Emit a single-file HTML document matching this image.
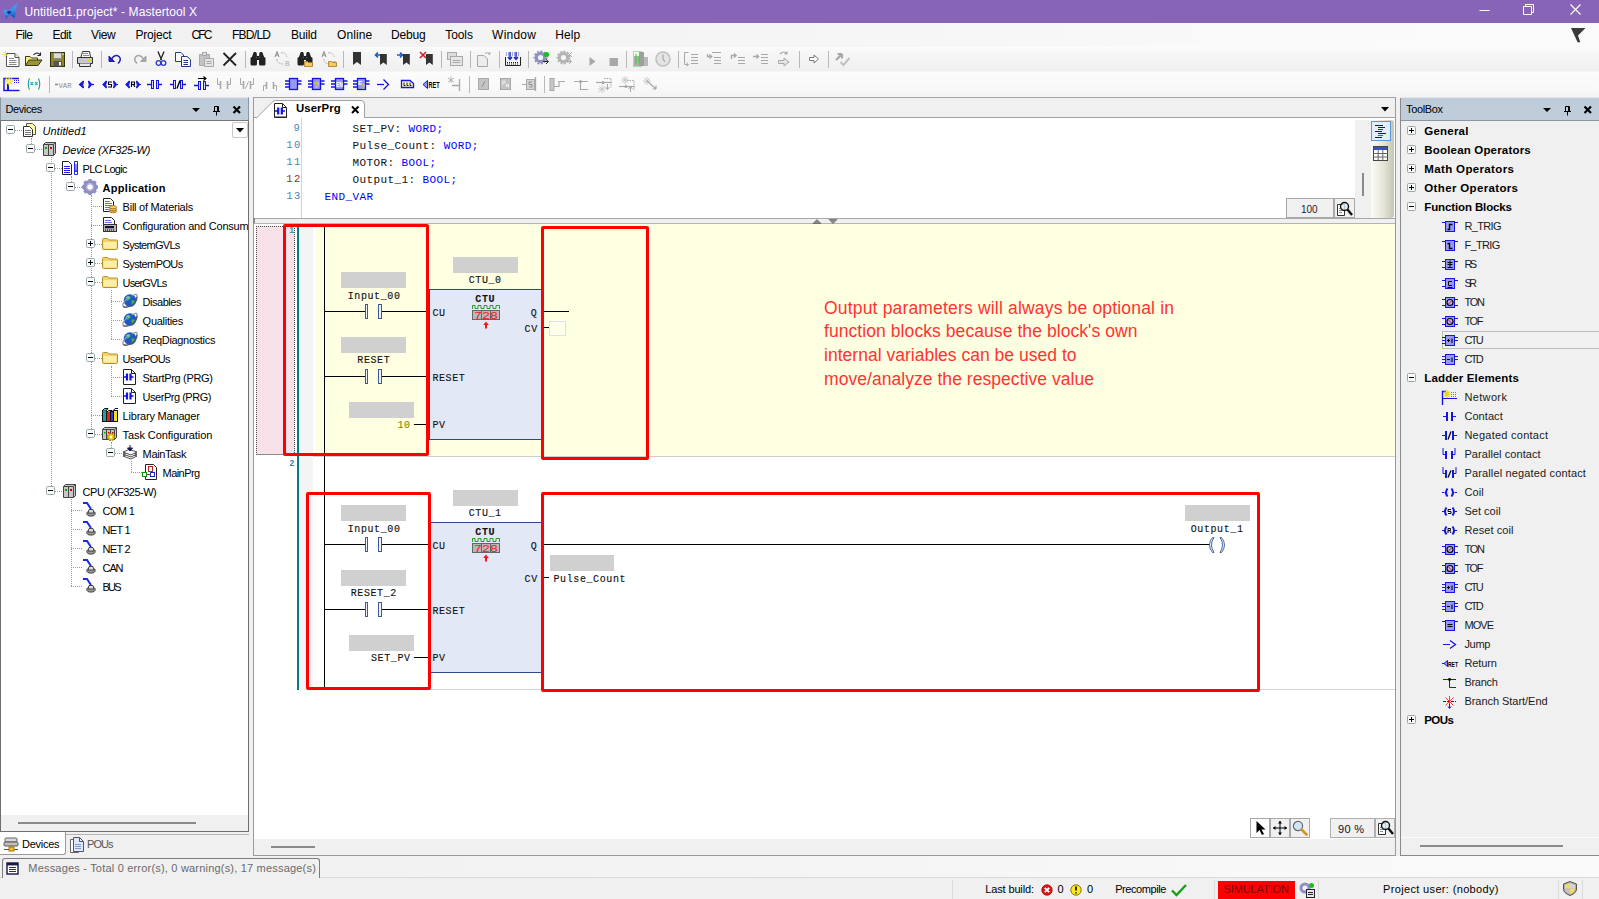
<!DOCTYPE html><html><head><meta charset="utf-8"><title>Untitled1.project* - Mastertool X</title><style>
*{box-sizing:border-box;margin:0;padding:0}
html,body{width:1599px;height:899px;overflow:hidden;background:#f0f0f0;font-family:"Liberation Sans",sans-serif;font-size:12px;color:#000}
.a{position:absolute}
.t{position:absolute;white-space:nowrap;line-height:1}
.m{font-family:"Liberation Mono",monospace}
svg{position:absolute;overflow:visible}
#title{left:0;top:0;width:1599px;height:23px;background:#8764b8}
#menu{left:0;top:23px;width:1599px;height:24px;background:linear-gradient(90deg,#f0f0f0,#f4f4f4 40%,#f9f9f9 75%,#fbfbfb)}
#tb{left:0;top:47px;width:1599px;height:51px;background:linear-gradient(#fcfcfc,#f6f6f6 6px,#f0f0f0 24px,#fcfcfc 25px,#f9f9f9 40px,#f3f3f3 50px)}
#tb2{left:0;top:72px;width:668px;height:24px;background:linear-gradient(#fcfcfc,#f7f7f7 8px,#eeeeee)}
.hdr{background:#bfcddb;height:22px}
.tree{font-size:11px}
.b{font-weight:bold}
.i{font-style:italic}
.gr{background:#d0d0d0}
.lt{font-family:"Liberation Mono",monospace;font-size:11px;color:#111}
.kw{color:#0000ff}
</style></head><body>
<div id="title" class="a">
<svg style="left:0px;top:0px" width="20" height="22" viewBox="0 0 20 22" ><defs><linearGradient id="lg" x1="0" y1="0" x2="0" y2="1"><stop offset="0" stop-color="#4a9ae8"/><stop offset=".5" stop-color="#3f8ee0"/><stop offset="1" stop-color="#0a4ec0"/></linearGradient></defs><path d="M17.2 2.8L14.8 18.2 6.3 12.4Z" fill="url(#lg)"/><path d="M2.6 9L11.6 11.4 6.2 19.2Z" fill="url(#lg)"/><path d="M6.6 12.2L8.8 10.7 11.6 11.4 9.2 14.5Z" fill="#0030b0"/></svg>
<div class="t" style="left:24.4px;top:5.84px;font-size:12px;letter-spacing:0.100px;color:#fff;">Untitled1.project* - Mastertool X</div>
<svg style="left:1479px;top:4px" width="12" height="12" viewBox="0 0 12 12" ><path d="M0.5 6.5H10.5" stroke="#fff" stroke-width="1" fill="none"/></svg><svg style="left:1523px;top:4px" width="12" height="12" viewBox="0 0 12 12" ><path d="M0.5 2.5H8.5V10.5H0.5Z M2.5 2.5V0.5H10.5V8.5H8.5" stroke="#fff" stroke-width="1" fill="none"/></svg><svg style="left:1570px;top:4px" width="12" height="12" viewBox="0 0 12 12" ><path d="M0.5 0.5L10.5 10.5M10.5 0.5L0.5 10.5" stroke="#fff" stroke-width="1.1" fill="none"/></svg>
</div>
<div id="menu" class="a">
<div class="t" style="left:15.4px;top:5.84px;font-size:12px;letter-spacing:-0.579px;">File</div>
<div class="t" style="left:52.4px;top:5.84px;font-size:12px;letter-spacing:-0.493px;">Edit</div>
<div class="t" style="left:91px;top:5.84px;font-size:12px;letter-spacing:-0.398px;">View</div>
<div class="t" style="left:135.4px;top:5.84px;font-size:12px;letter-spacing:-0.191px;">Project</div>
<div class="t" style="left:191.4px;top:5.84px;font-size:12px;letter-spacing:-1.831px;">CFC</div>
<div class="t" style="left:232px;top:5.84px;font-size:12px;letter-spacing:-0.735px;">FBD/LD</div>
<div class="t" style="left:291px;top:5.84px;font-size:12px;letter-spacing:-0.171px;">Build</div>
<div class="t" style="left:337.1px;top:5.84px;font-size:12px;letter-spacing:0.082px;">Online</div>
<div class="t" style="left:391px;top:5.84px;font-size:12px;letter-spacing:-0.190px;">Debug</div>
<div class="t" style="left:445.3px;top:5.84px;font-size:12px;letter-spacing:-0.103px;">Tools</div>
<div class="t" style="left:492.1px;top:5.84px;font-size:12px;letter-spacing:0.224px;">Window</div>
<div class="t" style="left:555.2px;top:5.84px;font-size:12px;letter-spacing:0.073px;">Help</div>
<svg style="left:1570px;top:5px" width="16" height="16" viewBox="0 0 16 16" ><path d="M1 0H15.5L8 7.5 10.3 14.2H7.6Z" fill="#3a3a3a"/></svg>
</div>
<div id="tb" class="a">
<svg style="left:2px;top:4px" width="16" height="16" viewBox="0 0 16 16" ><path d="M4.5 2.5H13L17 6.5V15.5H4.5Z" fill="#fff" stroke="#555"/><path d="M13 2.5V6.5H17" fill="#eee" stroke="#555"/><path d="M7 7.5H12M7 9.5H14.5M7 11.5H14.5M7 13.5H14.5" stroke="#8a8a8a"/><path d="M3.5 0V7M0 3.5H7M1 1L6 6M6 1L1 6" stroke="#f0e000" stroke-width=".9" stroke-dasharray="1.5 .8"/></svg>
<svg style="left:25px;top:4px" width="16" height="16" viewBox="0 0 16 16" ><path d="M0.5 14.5V5.5H5L6.5 7H12.5V9" fill="#f4f080" stroke="#3a3a10"/><path d="M0.5 14.5L4 9H17L13 14.5Z" fill="#9a9438" stroke="#3a3a10"/><path d="M8.5 4Q12 0 15.5 4M15.5 4.5V1.5M15.5 4.5H12.5" stroke="#222" fill="none" stroke-width="1.1"/></svg>
<svg style="left:49px;top:4px" width="16" height="16" viewBox="0 0 16 16" ><rect x="1.5" y="1.5" width="14" height="14" fill="#8c8630" stroke="#33300a"/><rect x="4.5" y="2" width="8" height="5.5" fill="#dcdcdc" stroke="#777" stroke-width=".6"/><rect x="4.5" y="10" width="8.5" height="5.5" fill="#555"/><rect x="10" y="11" width="2" height="3.5" fill="#f4f4f4"/><rect x="13.5" y="2.5" width="1.2" height="1.5" fill="#eee"/></svg>
<div class="a" style="left:72px;top:4px;width:1px;height:17px;background:#b8b8b8;"></div>
<svg style="left:77px;top:4px" width="16" height="16" viewBox="0 0 16 16" ><path d="M4 6L5.5 0.5H12.5L13.5 6" fill="#fff" stroke="#333"/><path d="M0.5 6.5H15.5V12.5H0.5Z" fill="#c8c8c8" stroke="#333"/><path d="M2.5 12.5V15.5H13.5V12.5" fill="#e8e8e8" stroke="#333"/><rect x="10" y="8" width="4" height="1.5" fill="#e8e000"/><path d="M6 2.5H11M6 4.5H12" stroke="#888"/></svg>
<div class="a" style="left:101px;top:4px;width:1px;height:17px;background:#b8b8b8;"></div>
<svg style="left:108px;top:4px" width="16" height="16" viewBox="0 0 16 16" ><path d="M3 8.5Q7 2.5 11 5.5Q14 8.5 10 12.5" stroke="#2222b4" stroke-width="1.5" fill="none"/><path d="M1 5V10.5H6.5Z" stroke="#2222b4" stroke-width="1" fill="#2222b4"/></svg>
<svg style="left:131px;top:4px" width="16" height="16" viewBox="0 0 16 16" ><path d="M13 8.5Q9 2.5 5 5.5Q2 8.5 6 12.5" stroke="#a8a8a8" stroke-width="1.6" fill="none"/><path d="M15 5V10.5H9.5Z" stroke="#a8a8a8" stroke-width="1" fill="#a8a8a8"/></svg>
<svg style="left:153px;top:4px" width="16" height="16" viewBox="0 0 16 16" ><path d="M5 0.5L8.5 9M11 0.5L7.5 9" stroke="#222" stroke-width="1.3"/><circle cx="5.5" cy="12" r="2.3" fill="none" stroke="#2a3ad0" stroke-width="1.3"/><circle cx="10.5" cy="12" r="2.3" fill="none" stroke="#2a3ad0" stroke-width="1.3"/></svg>
<svg style="left:175px;top:4px" width="16" height="16" viewBox="0 0 16 16" ><path d="M0.5 1.5H6L8.5 4V10.5H0.5Z" fill="#fff" stroke="#223a8a"/><path d="M6.5 5.5H12L15.5 8.5V15.5H6.5Z" fill="#fff" stroke="#223a8a"/><path d="M8.5 9.5H13M8.5 11.5H13M8.5 13.5H13" stroke="#223a8a"/></svg>
<svg style="left:198px;top:4px" width="16" height="16" viewBox="0 0 16 16" ><path d="M1.5 3.5H11.5V14.5H1.5Z" fill="#c4c4c4" stroke="#a8a8a8"/><rect x="4.5" y="1.5" width="4" height="3" fill="#ddd" stroke="#a8a8a8"/><path d="M6.5 7.5H15.5V15.5H6.5Z" fill="#e4e4e4" stroke="#a8a8a8"/><path d="M8.5 10.5H13.5M8.5 12.5H13.5" stroke="#a8a8a8"/></svg>
<svg style="left:222px;top:4px" width="16" height="16" viewBox="0 0 16 16" ><path d="M1.5 2L14 14.5M14 2L1.5 14.5" stroke="#222" stroke-width="1.8"/></svg>
<div class="a" style="left:245px;top:4px;width:1px;height:17px;background:#b8b8b8;"></div>
<svg style="left:250px;top:4px" width="16" height="16" viewBox="0 0 16 16" ><path d="M2.5 6L4 1.5H6L6.5 6M9.5 6L10 1.5H12L13.5 6" fill="#222" stroke="#222"/><rect x="0.5" y="6" width="6.5" height="8.5" rx="1.5" fill="#222"/><rect x="9" y="6" width="6.5" height="8.5" rx="1.5" fill="#222"/><rect x="6.5" y="5" width="3" height="4" fill="#222"/></svg>
<svg style="left:274px;top:4px" width="16" height="16" viewBox="0 0 16 16" ><path d="M1 6L3 0.5 5 6M1.8 4H4.2" stroke="#8a8a8a" fill="none"/><text x="11" y="15" font-family="Liberation Sans,sans-serif" font-size="7" fill="#a8a8a8">B</text><path d="M7 2Q12 1 13 6" stroke="#a8a8a8" fill="none" stroke-dasharray="1.5 1"/><path d="M3 8Q3 13 9 13" stroke="#a8a8a8" fill="none" stroke-dasharray="1.5 1"/></svg>
<svg style="left:297px;top:4px" width="16" height="16" viewBox="0 0 16 16" ><path d="M2.5 6L4 1.5H6L6.5 6M9.5 6L10 1.5H12L13.5 6" fill="#222" stroke="#222"/><rect x="0.5" y="6" width="6.5" height="8.5" rx="1.5" fill="#222"/><rect x="9" y="6" width="6.5" height="8.5" rx="1.5" fill="#222"/><rect x="6.5" y="5" width="3" height="4" fill="#222"/><path d="M7.5 10.5H10.5L11.5 11.5H15.5V15.5H7.5Z" fill="#f6c860" stroke="#a87818" stroke-width=".8"/></svg>
<svg style="left:321px;top:4px" width="16" height="16" viewBox="0 0 16 16" ><path d="M1 6L3 0.5 5 6M1.8 4H4.2" stroke="#8a8a8a" fill="none"/><text x="11" y="15" font-family="Liberation Sans,sans-serif" font-size="7" fill="#a8a8a8">B</text><path d="M7 2Q12 1 13 6" stroke="#a8a8a8" fill="none" stroke-dasharray="1.5 1"/><path d="M3 8Q3 13 9 13" stroke="#a8a8a8" fill="none" stroke-dasharray="1.5 1"/><path d="M7.5 10.5H10.5L11.5 11.5H15.5V15.5H7.5Z" fill="#f6c860" stroke="#a87818" stroke-width=".8"/></svg>
<div class="a" style="left:343px;top:4px;width:1px;height:17px;background:#b8b8b8;"></div>
<svg style="left:353px;top:4px" width="16" height="16" viewBox="0 0 16 16" ><g transform="translate(0,1)"><path d="M0 0H8V13L4 10 0 13Z" fill="#333"/></g></svg>
<svg style="left:374px;top:4px" width="16" height="16" viewBox="0 0 16 16" ><path d="M7 4H1.5M4 1.5L1.5 4 4 6.5" stroke="#1a5ac8" stroke-width="1.6" fill="none"/><g transform="translate(6,3) scale(.85)"><path d="M0 0H8V13L4 10 0 13Z" fill="#333"/></g></svg>
<svg style="left:396px;top:4px" width="16" height="16" viewBox="0 0 16 16" ><path d="M1 4H6.5M4 1.5L6.5 4 4 6.5" stroke="#1a5ac8" stroke-width="1.6" fill="none"/><g transform="translate(7,3) scale(.85)"><path d="M0 0H8V13L4 10 0 13Z" fill="#333"/></g></svg>
<svg style="left:419px;top:4px" width="16" height="16" viewBox="0 0 16 16" ><path d="M1 1L7 7M7 1L1 7" stroke="#d02020" stroke-width="1.6"/><g transform="translate(7,3) scale(.85)"><path d="M0 0H8V13L4 10 0 13Z" fill="#333"/></g></svg>
<div class="a" style="left:441px;top:4px;width:1px;height:17px;background:#b8b8b8;"></div>
<svg style="left:447px;top:4px" width="16" height="16" viewBox="0 0 16 16" ><rect x="0.5" y="1.5" width="9" height="7" fill="#ddd" stroke="#a8a8a8"/><rect x="3.5" y="5.5" width="12" height="9" fill="#e8e8e8" stroke="#a8a8a8"/><path d="M5.5 9.5H13.5M5.5 11.5H13.5" stroke="#a8a8a8"/></svg>
<div class="a" style="left:470px;top:4px;width:1px;height:17px;background:#b8b8b8;"></div>
<svg style="left:476px;top:4px" width="16" height="16" viewBox="0 0 16 16" ><path d="M1.5 4.5H8L11.5 8V15.5H1.5Z" fill="#ececec" stroke="#a8a8a8"/><path d="M9 2.5Q12 0.5 14 3M14 3V1M14 3H12" stroke="#a8a8a8" fill="none"/></svg>
<div class="a" style="left:499px;top:4px;width:1px;height:17px;background:#b8b8b8;"></div>
<svg style="left:505px;top:4px" width="16" height="16" viewBox="0 0 16 16" ><path d="M1 2H15M1 4H15" stroke="#4a5ac8" stroke-dasharray="1 1"/><path d="M5 1V8M11 1V8M3 6L5 8.5 7 6M9 6L11 8.5 13 6" stroke="#1a2ab8" stroke-width="1.3" fill="none"/><path d="M0.5 6V14.5H15.5V6" stroke="#222" fill="none"/><path d="M2 11.5H14M2 13H14" stroke="#222" stroke-dasharray="1 1"/></svg>
<div class="a" style="left:528px;top:4px;width:1px;height:17px;background:#b8b8b8;"></div>
<svg style="left:534px;top:4px" width="16" height="16" viewBox="0 0 16 16" ><circle cx="6.5" cy="6.5" r="4.2" fill="none" stroke="#8f8fc4" stroke-width="3.2"/><circle cx="6.5" cy="6.5" r="6.3" fill="none" stroke="#8f8fc4" stroke-width="1.4" stroke-dasharray="2 1.6"/><circle cx="12.5" cy="3.5" r="2.6" fill="#18c018"/><path d="M9 10.5H14M12 8.5L14.5 10.5 12 13" stroke="#222" fill="none"/></svg>
<svg style="left:557px;top:4px" width="16" height="16" viewBox="0 0 16 16" ><circle cx="6.5" cy="6.5" r="4.2" fill="none" stroke="#b4b4b4" stroke-width="3.2"/><circle cx="6.5" cy="6.5" r="6.3" fill="none" stroke="#b4b4b4" stroke-width="1.4" stroke-dasharray="2 1.6"/><path d="M10 1L15 6M15 1L10 6" stroke="#a8a8a8"/><path d="M9 10.5H14M12 8.5L14.5 10.5 12 13" stroke="#a8a8a8" fill="none"/></svg>
<svg style="left:586px;top:4px" width="16" height="16" viewBox="0 0 16 16" ><path d="M3.5 6V15L9.5 10.5Z" fill="#a8a8a8"/></svg>
<svg style="left:606px;top:4px" width="16" height="16" viewBox="0 0 16 16" ><rect x="3.5" y="7" width="8.5" height="8" fill="#a8a8a8"/></svg>
<div class="a" style="left:626px;top:4px;width:1px;height:17px;background:#b8b8b8;"></div>
<svg style="left:633px;top:4px" width="16" height="16" viewBox="0 0 16 16" ><rect x="1" y="5" width="5" height="10" fill="#b0b0b0"/><rect x="6" y="1" width="5" height="14" fill="#a0a0a0"/><rect x="11" y="6" width="4" height="9" fill="#b8b8b8"/><rect x="0.5" y="0.5" width="8" height="15" fill="none" stroke="#30e030" stroke-dasharray="1 1"/><path d="M3 3V13M6 5V12" stroke="#30d030"/></svg>
<svg style="left:655px;top:4px" width="16" height="16" viewBox="0 0 16 16" ><circle cx="8" cy="8" r="7" fill="#e4e4e4" stroke="#c0c0c0" stroke-width="1.6"/><path d="M8 3.5V8L10 11" stroke="#a8a8a8" fill="none" stroke-width="1.2"/></svg>
<div class="a" style="left:678px;top:4px;width:1px;height:17px;background:#b8b8b8;"></div>
<svg style="left:683px;top:4px" width="16" height="16" viewBox="0 0 16 16" ><path d="M5.5 1.5H1.5V13.5H5M3.5 11.5L5.5 13.5 3.5 15.5" stroke="#a8a8a8" fill="none"/><path d="M8 3.5H15M8 6.5H15M8 9.5H15M8 12.5H15" stroke="#a8a8a8"/></svg>
<svg style="left:706px;top:4px" width="16" height="16" viewBox="0 0 16 16" ><path d="M6 5.5H1.5V3M3.5 3.5L5.8 5.5 3.5 7.5" stroke="#a8a8a8" fill="none" stroke-width="1.3"/><path d="M6 1.5H15M8 6.5H15M8 9.5H15M8 12.5H15" stroke="#a8a8a8"/></svg>
<svg style="left:730px;top:4px" width="16" height="16" viewBox="0 0 16 16" ><path d="M1.5 8V4.5H6M4 2.5L6.2 4.5 4 6.5" stroke="#a8a8a8" fill="none" stroke-width="1.3"/><path d="M8 6.5H15M8 6.5H15M8 9.5H15M8 12.5H15" stroke="#a8a8a8"/></svg>
<svg style="left:753px;top:4px" width="16" height="16" viewBox="0 0 16 16" ><path d="M0 5.5H5.5M3.5 3.5L5.7 5.5 3.5 7.5" stroke="#a8a8a8" fill="none" stroke-width="1.3"/><path d="M8 3.5H15M8 6.5H15M8 9.5H15M8 12.5H15" stroke="#a8a8a8"/></svg>
<svg style="left:776px;top:4px" width="16" height="16" viewBox="0 0 16 16" ><path d="M4 3Q8 -1 11 3M11 3V.5M11 3H8.5" stroke="#a8a8a8" fill="none" stroke-width="1.2"/><path d="M2.5 9.5H8V7L13 11 8 15V12.5H2.5Z" fill="#e4e4e4" stroke="#a8a8a8"/></svg>
<div class="a" style="left:799px;top:4px;width:1px;height:17px;background:#b8b8b8;"></div>
<svg style="left:806px;top:4px" width="16" height="16" viewBox="0 0 16 16" ><path d="M3.5 6.5H8V4L12.5 8 8 12V9.5H3.5Z" fill="#fdfdfd" stroke="#7a7a7a" stroke-width="1"/></svg>
<div class="a" style="left:828px;top:4px;width:1px;height:17px;background:#b8b8b8;"></div>
<svg style="left:834px;top:4px" width="16" height="16" viewBox="0 0 16 16" ><path d="M2 9L8 3M8 3H3.5M8 3V7.5" stroke="#a8a8a8" stroke-width="2.2" fill="none"/><path d="M6.5 11L9.5 14 15.5 7" stroke="#c0c0c0" stroke-width="2" fill="none"/></svg>
<svg style="left:3px;top:29px" width="16" height="16" viewBox="0 0 16 16" ><path d="M1 14.5V2.5H16" stroke="#1414e6" fill="none" stroke-width="1.4"/><path d="M0.3 14.5H16.5" stroke="#1414e6" stroke-width="1.4"/><path d="M5 8V14" stroke="#1414e6" stroke-width="2"/><path d="M11 4.5H16M11 6.5H16" stroke="#22c" stroke-dasharray="1 1"/><path d="M6 1V9.5M2 5.2H10M3 2.2L9 8.2M9 2.2L3 8.2" stroke="#f0e000" stroke-width="1.3"/><circle cx="6" cy="5.2" r="1.6" fill="#ffff60"/></svg>
<svg style="left:27px;top:29px" width="16" height="16" viewBox="0 0 16 16" ><path d="M2.5 2.5Q0 8 2.5 13.5M11.5 2.5Q14 8 11.5 13.5" stroke="#18a0a0" fill="none" stroke-width="1.1"/><path d="M3.5 6L6 9M6 6L3.5 9M8 6L10.5 9M10.5 6L8 9" stroke="#18a0a0" stroke-width="1.1"/></svg>
<div class="a" style="left:49px;top:29px;width:1px;height:17px;background:#b8b8b8;"></div>
<svg style="left:55px;top:29px" width="16" height="16" viewBox="0 0 16 16" ><path d="M0 8.5H3" stroke="#8c8c8c" stroke-width="1.6"/><text x="3.5" y="11.5" font-family="Liberation Mono,monospace" font-size="7.5" fill="#8c8c8c" textLength="13" lengthAdjust="spacingAndGlyphs">VAR</text></svg>
<svg style="left:78px;top:29px" width="16" height="16" viewBox="0 0 16 16" ><path d="M5.5 5L1.5 8.5L5.5 12Q4 8.5 5.5 5ZM10.5 5L13.5 8.5L10.5 12Q12 8.5 10.5 5Z" fill="#1414e6" stroke="#1414e6" stroke-width="1.2"/><path d="M13.5 8.5H16" stroke="#1414e6" stroke-width="1.3"/></svg>
<svg style="left:102px;top:29px" width="16" height="16" viewBox="0 0 16 16" ><path d="M4.5 5L1 8.5L4.5 12Q3 8.5 4.5 5ZM11.5 5L14.5 8.5L11.5 12Q13 8.5 11.5 5Z" fill="#1414e6" stroke="#1414e6" stroke-width="1.2"/><path d="M14.5 8.5H16" stroke="#1414e6" stroke-width="1.2"/><path d="M10 6H6.5V8.5H9.5V11H6" stroke="#000" fill="none" stroke-width="1.1"/></svg>
<svg style="left:125px;top:29px" width="16" height="16" viewBox="0 0 16 16" ><path d="M4.5 5L1 8.5L4.5 12Q3 8.5 4.5 5ZM11.5 5L14.5 8.5L11.5 12Q13 8.5 11.5 5Z" fill="#1414e6" stroke="#1414e6" stroke-width="1.2"/><path d="M14.5 8.5H16" stroke="#1414e6" stroke-width="1.2"/><path d="M6.5 11V6H9.5V8.5H6.5M8.5 8.5L10 11" stroke="#000" fill="none" stroke-width="1.1"/></svg>
<svg style="left:147px;top:29px" width="16" height="16" viewBox="0 0 16 16" ><path d="M0 8.5H4M11 8.5H15" stroke="#1414e6" stroke-width="1.3"/><rect x="4.5" y="4.5" width="2" height="8" fill="#d4d4fc" stroke="#1414e6"/><rect x="9.5" y="4.5" width="2" height="8" fill="#d4d4fc" stroke="#1414e6"/></svg>
<svg style="left:170px;top:29px" width="16" height="16" viewBox="0 0 16 16" ><path d="M0 8.5H4M12 8.5H16" stroke="#1414e6" stroke-width="1.3"/><rect x="3.5" y="4.5" width="2" height="8" fill="#d4d4fc" stroke="#1414e6"/><rect x="10.5" y="4.5" width="2" height="8" fill="#d4d4fc" stroke="#1414e6"/><path d="M7 12.5L10 4.5" stroke="#000" stroke-width="1.4"/></svg>
<svg style="left:194px;top:29px" width="16" height="16" viewBox="0 0 16 16" ><path d="M0 9.5H4M11 9.5H15" stroke="#1414e6" stroke-width="1.3"/><rect x="4.5" y="5.5" width="2" height="8" fill="#d4d4fc" stroke="#1414e6"/><rect x="9.5" y="5.5" width="2" height="8" fill="#d4d4fc" stroke="#1414e6"/><path d="M4 2.5H12M9.5 0.5L12 2.5 9.5 4.5" stroke="#000" fill="none" stroke-width="1.1"/></svg>
<svg style="left:216px;top:29px" width="16" height="16" viewBox="0 0 16 16" ><path d="M1.5 2V8.5H4M14.5 2V8.5H12" stroke="#a8a8a8" fill="none"/><path d="M4.5 5V13M11.5 5V13" stroke="#a8a8a8" stroke-width="1.6"/></svg>
<svg style="left:239px;top:29px" width="16" height="16" viewBox="0 0 16 16" ><path d="M1.5 2V8.5H4M14.5 2V8.5H12" stroke="#a8a8a8" fill="none"/><path d="M4.5 5V13M11.5 5V13" stroke="#a8a8a8" stroke-width="1.6"/><path d="M6.5 12.5L9.5 5.5" stroke="#a8a8a8"/></svg>
<svg style="left:262px;top:29px" width="16" height="16" viewBox="0 0 16 16" ><path d="M1.5 15V9.5H4M14.5 15V9.5H12" stroke="#a8a8a8" fill="none"/><path d="M4.5 6V13M11.5 6V13" stroke="#a8a8a8" stroke-width="1.6"/></svg>
<svg style="left:285px;top:29px" width="16" height="16" viewBox="0 0 16 16" ><rect x="4.5" y="2.5" width="8" height="11" fill="#9898f6" stroke="#1414e6" stroke-width="1.3"/><path d="M0 5H4M0 8H4M0 11H4M13 5H16.5M13 8H16.5" stroke="#1414e6" stroke-width="1.3"/></svg>
<svg style="left:308px;top:29px" width="16" height="16" viewBox="0 0 16 16" ><rect x="4.5" y="2.5" width="8" height="11" fill="#9898f6" stroke="#1414e6" stroke-width="1.3"/><path d="M0 5H4M0 8H4M0 11H4M13 5H16.5M13 8H16.5" stroke="#1414e6" stroke-width="1.3"/><text x="5.6" y="11.5" font-family="Liberation Sans,sans-serif" font-size="9" font-weight="bold" fill="#e8d000">?</text></svg>
<svg style="left:331px;top:29px" width="16" height="16" viewBox="0 0 16 16" ><rect x="4.5" y="2.5" width="8" height="11" fill="#9898f6" stroke="#1414e6" stroke-width="1.3"/><path d="M0 5H4M0 8H4M0 11H4M13 5H16.5M13 8H16.5" stroke="#1414e6" stroke-width="1.3"/><text x="5" y="11" font-family="Liberation Sans,sans-serif" font-size="6.5" font-weight="bold" fill="#fff" textLength="7" lengthAdjust="spacingAndGlyphs">EN</text></svg>
<svg style="left:353px;top:29px" width="16" height="16" viewBox="0 0 16 16" ><rect x="4.5" y="2.5" width="8" height="11" fill="#9898f6" stroke="#1414e6" stroke-width="1.3"/><path d="M0 5H4M0 8H4M0 11H4M13 5H16.5M13 8H16.5" stroke="#1414e6" stroke-width="1.3"/><text x="5" y="9" font-family="Liberation Sans,sans-serif" font-size="6" font-weight="bold" fill="#fff">E</text><text x="8" y="12.5" font-family="Liberation Sans,sans-serif" font-size="7" font-weight="bold" fill="#e8d000">?</text></svg>
<svg style="left:376px;top:29px" width="16" height="16" viewBox="0 0 16 16" ><path d="M1 8.5H8" stroke="#1414e6" stroke-width="1.3"/><path d="M7.5 3.5L12.5 8.5 7.5 13.5" stroke="#1414e6" stroke-width="1.4" fill="none"/></svg>
<svg style="left:400px;top:29px" width="16" height="16" viewBox="0 0 16 16" ><path d="M1.5 4.5H10L13.5 7.5V11.5H1.5Z" fill="#fff8c0" stroke="#1414e6" stroke-width="1.3"/><path d="M4 6.5V9.5H5.5M7 6.5V9.5H8.5M10 6.5V9.5H11.5" stroke="#000" fill="none" stroke-width=".9"/></svg>
<svg style="left:422px;top:29px" width="16" height="16" viewBox="0 0 16 16" ><path d="M5.5 4.5L1 8.5 5.5 12.5Z" fill="#9898f6" stroke="#1414e6"/><text x="6.5" y="12" font-family="Liberation Sans,sans-serif" font-size="8.5" font-weight="bold" fill="#000" textLength="11" lengthAdjust="spacingAndGlyphs">RET</text></svg>
<svg style="left:447px;top:29px" width="16" height="16" viewBox="0 0 16 16" ><path d="M1 2L7 6M4 0.5V7M1 6L7 2" stroke="#a8a8a8" stroke-width=".9"/><path d="M5 9.5H12M12.5 3V15" stroke="#a8a8a8" stroke-width="1.3"/></svg>
<div class="a" style="left:469px;top:29px;width:1px;height:17px;background:#b8b8b8;"></div>
<svg style="left:477px;top:29px" width="16" height="16" viewBox="0 0 16 16" ><rect x="1.5" y="2.5" width="10" height="11" fill="#c4c4c4" stroke="#a8a8a8"/><path d="M5 11L8 5" stroke="#909090"/></svg>
<svg style="left:499px;top:29px" width="16" height="16" viewBox="0 0 16 16" ><rect x="1.5" y="2.5" width="10" height="11" fill="#c4c4c4" stroke="#a8a8a8"/><path d="M3.5 9V5H6V7H3.5M7.5 11V8L9.5 11V8" stroke="#eee" fill="none" stroke-width=".9"/></svg>
<svg style="left:521px;top:29px" width="16" height="16" viewBox="0 0 16 16" ><path d="M1 8.5H5" stroke="#a8a8a8"/><rect x="5.5" y="3.5" width="8" height="10" fill="#d4d4d4" stroke="#a8a8a8"/><path d="M14.5 1V15" stroke="#a8a8a8" stroke-width="1.3"/><path d="M11 6H8V8.5H11V11H8" stroke="#909090" fill="none"/></svg>
<div class="a" style="left:544px;top:29px;width:1px;height:17px;background:#b8b8b8;"></div>
<svg style="left:549px;top:29px" width="16" height="16" viewBox="0 0 16 16" ><rect x="1" y="2.5" width="4" height="12" fill="#c8c8c8" stroke="#a8a8a8"/><path d="M5 10.5H10V5.5H16" stroke="#a8a8a8" fill="none" stroke-width="1.2"/></svg>
<svg style="left:573px;top:29px" width="16" height="16" viewBox="0 0 16 16" ><path d="M1 5.5H15M7.5 5.5V13.5H15" stroke="#a8a8a8" fill="none" stroke-width="1.2"/><circle cx="7.5" cy="5.5" r="1.5" fill="#a8a8a8"/></svg>
<svg style="left:596px;top:29px" width="16" height="16" viewBox="0 0 16 16" ><path d="M0 6.5H16" stroke="#a8a8a8" stroke-width="1.2"/><path d="M8 2.5H15V11.5" stroke="#a8a8a8" fill="none" stroke-dasharray="1.5 1"/><path d="M11.5 8V13M9.5 11L11.5 13.5 13.5 11" stroke="#a8a8a8" fill="none"/><path d="M3 10L9 16M9 10L3 16M6 9V17M2 13H10" stroke="#c4c4c4" stroke-width=".9"/><circle cx="7" cy="6.5" r="1.5" fill="#a8a8a8"/></svg>
<svg style="left:619px;top:29px" width="16" height="16" viewBox="0 0 16 16" ><path d="M0 10.5H16" stroke="#a8a8a8" stroke-width="1.2"/><path d="M8 4.5H15V15" stroke="#a8a8a8" fill="none" stroke-dasharray="1.5 1"/><path d="M11.5 16V11M9.5 13L11.5 10.5 13.5 13" stroke="#a8a8a8" fill="none"/><path d="M3 1L9 7M9 1L3 7M6 0V8M2 4H10" stroke="#c4c4c4" stroke-width=".9"/><circle cx="7" cy="10.5" r="1.5" fill="#a8a8a8"/></svg>
<svg style="left:642px;top:29px" width="16" height="16" viewBox="0 0 16 16" ><path d="M2 2L8 8M8 2L2 8M5 1V9M1 5H9" stroke="#c4c4c4" stroke-width=".9"/><path d="M5 5L14 13M14 13V9.5M14 13H10.5" stroke="#a8a8a8" fill="none" stroke-width="1.2"/></svg>
</div>
<div class="a" style="left:0;top:98px;width:249px;height:734px;background:#fff;border:1px solid #6f6f6f;border-top:none"></div>
<div class="a hdr" style="left:0;top:97px;width:249px;height:24px;border-top:1px solid #dfe6ee;border-bottom:1px solid #787878;border-left:1px solid #8a96a3;border-right:1px solid #8a96a3"></div>
<div class="t" style="left:5.5px;top:103.69px;font-size:11px;letter-spacing:-0.404px;">Devices</div>
<svg style="left:192px;top:106px" width="50" height="10" viewBox="0 0 50 10" ><path d="M0 2H8L4 6Z" fill="#000"/><path d="M22.5 0.5H26.5V5.5H22.5Z M21 5.5H28 M24.5 6V9.5" stroke="#000" fill="none"/><path d="M25.5 1V5" stroke="#000"/><path d="M41.5 0.5L48 7 M48 0.5L41.5 7" stroke="#000" stroke-width="2.2" fill="none"/></svg>
<div class="a" style="left:232px;top:122px;width:16px;height:16px;background:#fff;border:1px solid #c8c8c8;border-radius:2px"></div>
<svg style="left:236px;top:128px" width="8" height="5" viewBox="0 0 8 5" ><path d="M0 0H8L4 4.5Z" fill="#000"/></svg>
<div class="a tree" style="left:1px;top:120px;width:247px;height:694px;overflow:hidden">
<div class="a" style="left:30px;top:18px;width:0;height:6px;border-left:1px dotted #9a9a9a"></div>
<div class="a" style="left:50px;top:37px;width:0;height:329px;border-left:1px dotted #9a9a9a"></div>
<div class="a" style="left:70px;top:56px;width:0;height:6px;border-left:1px dotted #9a9a9a"></div>
<div class="a" style="left:90px;top:75px;width:0;height:234px;border-left:1px dotted #9a9a9a"></div>
<div class="a" style="left:110px;top:170px;width:0;height:49px;border-left:1px dotted #9a9a9a"></div>
<div class="a" style="left:110px;top:246px;width:0;height:30px;border-left:1px dotted #9a9a9a"></div>
<div class="a" style="left:110px;top:322px;width:0;height:6px;border-left:1px dotted #9a9a9a"></div>
<div class="a" style="left:130px;top:341px;width:0;height:11px;border-left:1px dotted #9a9a9a"></div>
<div class="a" style="left:70px;top:379px;width:0;height:87px;border-left:1px dotted #9a9a9a"></div>
<div class="a" style="left:14px;top:10px;width:7px;height:0;border-top:1px dotted #9a9a9a"></div>
<svg style="left:5px;top:5px" width="9" height="9" viewBox="0 0 9 9" ><rect x="0.5" y="0.5" width="8" height="8" rx="1" fill="#fafcfc" stroke="#9aa6aa"/><path d="M2 4.5H7" stroke="#000"/></svg>
<svg style="left:21px;top:2px" width="16" height="16" viewBox="0 0 16 16" ><path d="M4.5 1.5H10.5L13.5 4.5V12.5H4.5Z" fill="#ffffa8" stroke="#555"/><path d="M1.5 4.5H7.5L10.5 7.5V14.5H1.5Z" fill="#fff" stroke="#333"/><path d="M3 8.5H9M3 10.5H9M3 12.5H9" stroke="#777"/></svg>
<div class="t i" style="left:41.6px;top:5.69px;font-size:11px;letter-spacing:0.061px;">Untitled1</div>
<div class="a" style="left:34px;top:29px;width:7px;height:0;border-top:1px dotted #9a9a9a"></div>
<svg style="left:25px;top:24px" width="9" height="9" viewBox="0 0 9 9" ><rect x="0.5" y="0.5" width="8" height="8" rx="1" fill="#fafcfc" stroke="#9aa6aa"/><path d="M2 4.5H7" stroke="#000"/></svg>
<svg style="left:41px;top:21px" width="16" height="16" viewBox="0 0 16 16" ><path d="M1.5 3.5L3.5 1.5H13.5V12.5L11.5 14.5H1.5Z" fill="#c8c8c8" stroke="#444"/><path d="M1.5 3.5H11.5V14.5M11.5 3.5L13.5 1.5M6.5 3.5V14.5" stroke="#444" fill="none"/><rect x="3" y="6" width="2" height="2" fill="#0a0"/><rect x="8" y="6" width="2" height="2" fill="#c00"/></svg>
<div class="t i" style="left:61.6px;top:24.69px;font-size:11px;letter-spacing:-0.177px;">Device (XF325-W)</div>
<div class="a" style="left:54px;top:48px;width:7px;height:0;border-top:1px dotted #9a9a9a"></div>
<svg style="left:45px;top:43px" width="9" height="9" viewBox="0 0 9 9" ><rect x="0.5" y="0.5" width="8" height="8" rx="1" fill="#fafcfc" stroke="#9aa6aa"/><path d="M2 4.5H7" stroke="#000"/></svg>
<svg style="left:61px;top:40px" width="16" height="16" viewBox="0 0 16 16" ><path d="M0.5 1.5H6.5L9.5 4.5V14.5H0.5Z" fill="#fff" stroke="#222"/><path d="M2 6.5H8M2 8.5H8M2 10.5H8M2 12.5H8" stroke="#22f"/><path d="M12.5 1.5H15.5V14.5H12.5Z" fill="none" stroke="#22f" rx="1"/><path d="M14 4V11M12.6 9.5L14 12 15.4 9.5" stroke="#22f" fill="none"/></svg>
<div class="t" style="left:81.6px;top:43.69px;font-size:11px;letter-spacing:-0.744px;">PLC Logic</div>
<div class="a" style="left:74px;top:67px;width:7px;height:0;border-top:1px dotted #9a9a9a"></div>
<svg style="left:65px;top:62px" width="9" height="9" viewBox="0 0 9 9" ><rect x="0.5" y="0.5" width="8" height="8" rx="1" fill="#fafcfc" stroke="#9aa6aa"/><path d="M2 4.5H7" stroke="#000"/></svg>
<svg style="left:81px;top:59px" width="16" height="16" viewBox="0 0 16 16" ><g transform="translate(8,8)"><rect x="-1.6" y="-8" width="3.2" height="4" fill="#8f8fc4" transform="rotate(0)"/><rect x="-1.6" y="-8" width="3.2" height="4" fill="#8f8fc4" transform="rotate(45)"/><rect x="-1.6" y="-8" width="3.2" height="4" fill="#8f8fc4" transform="rotate(90)"/><rect x="-1.6" y="-8" width="3.2" height="4" fill="#8f8fc4" transform="rotate(135)"/><rect x="-1.6" y="-8" width="3.2" height="4" fill="#8f8fc4" transform="rotate(180)"/><rect x="-1.6" y="-8" width="3.2" height="4" fill="#8f8fc4" transform="rotate(225)"/><rect x="-1.6" y="-8" width="3.2" height="4" fill="#8f8fc4" transform="rotate(270)"/><rect x="-1.6" y="-8" width="3.2" height="4" fill="#8f8fc4" transform="rotate(315)"/><circle r="5.4" fill="none" stroke="#8f8fc4" stroke-width="3.4"/><circle r="3.2" fill="#fff" stroke="#7676b0" stroke-width=".6"/></g></svg>
<div class="t b" style="left:101.6px;top:62.69px;font-size:11px;letter-spacing:0.291px;">Application</div>
<div class="a" style="left:90px;top:86px;width:11px;height:0;border-top:1px dotted #9a9a9a"></div>
<svg style="left:101px;top:78px" width="16" height="16" viewBox="0 0 16 16" ><path d="M1.5 0.5H8.5L11.5 3.5V13.5H1.5Z" fill="#fff" stroke="#222"/><path d="M3 3.5H8M3 5.5H10M3 7.5H10M3 9.5H8M3 11.5H7" stroke="#66f"/><ellipse cx="11" cy="13.2" rx="3.6" ry="1.6" fill="#e8b040" stroke="#8a6210" stroke-width=".7"/><ellipse cx="11" cy="11.2" rx="3.6" ry="1.6" fill="#f0c050" stroke="#8a6210" stroke-width=".7"/><ellipse cx="11" cy="9.2" rx="3.6" ry="1.6" fill="#f8d060" stroke="#8a6210" stroke-width=".7"/></svg>
<div class="t" style="left:121.6px;top:81.69px;font-size:11px;letter-spacing:-0.249px;">Bill of Materials</div>
<div class="a" style="left:90px;top:105px;width:11px;height:0;border-top:1px dotted #9a9a9a"></div>
<svg style="left:101px;top:97px" width="16" height="16" viewBox="0 0 16 16" ><path d="M1.5 0.5H9.5L12.5 3.5V8.5H1.5Z" fill="#fff" stroke="#222"/><path d="M3 3.5H9M3 5.5H10" stroke="#66f"/><rect x="1.5" y="7.5" width="13" height="7" fill="#b8b8b8" stroke="#333"/><rect x="3" y="9" width="9" height="2.2" fill="#113"/><path d="M3.5 12V14M5.5 12V14M7.5 12V14M9.5 12V14M11.5 12V14" stroke="#555"/></svg>
<div class="t" style="left:121.6px;top:100.69px;font-size:11px;letter-spacing:-0.207px;">Configuration and Consumption</div>
<div class="a" style="left:94px;top:124px;width:7px;height:0;border-top:1px dotted #9a9a9a"></div>
<svg style="left:85px;top:119px" width="9" height="9" viewBox="0 0 9 9" ><rect x="0.5" y="0.5" width="8" height="8" rx="1" fill="#fafcfc" stroke="#9aa6aa"/><path d="M2 4.5H7" stroke="#000"/><path d="M4.5 2V7" stroke="#000"/></svg>
<svg style="left:101px;top:116px" width="16" height="16" viewBox="0 0 16 16" ><path d="M0.5 3.5Q0.5 2.5 1.5 2.5H5.5L7 4H14.5Q15.5 4 15.5 5V12.5Q15.5 13.5 14.5 13.5H1.5Q0.5 13.5 0.5 12.5Z" fill="#f3d36a" stroke="#b8902a"/><path d="M1.5 6H14.5V12.5H1.5Z" fill="#fbeea8"/></svg>
<div class="t" style="left:121.6px;top:119.69px;font-size:11px;letter-spacing:-0.721px;">SystemGVLs</div>
<div class="a" style="left:94px;top:143px;width:7px;height:0;border-top:1px dotted #9a9a9a"></div>
<svg style="left:85px;top:138px" width="9" height="9" viewBox="0 0 9 9" ><rect x="0.5" y="0.5" width="8" height="8" rx="1" fill="#fafcfc" stroke="#9aa6aa"/><path d="M2 4.5H7" stroke="#000"/><path d="M4.5 2V7" stroke="#000"/></svg>
<svg style="left:101px;top:135px" width="16" height="16" viewBox="0 0 16 16" ><path d="M0.5 3.5Q0.5 2.5 1.5 2.5H5.5L7 4H14.5Q15.5 4 15.5 5V12.5Q15.5 13.5 14.5 13.5H1.5Q0.5 13.5 0.5 12.5Z" fill="#f3d36a" stroke="#b8902a"/><path d="M1.5 6H14.5V12.5H1.5Z" fill="#fbeea8"/></svg>
<div class="t" style="left:121.6px;top:138.69px;font-size:11px;letter-spacing:-0.602px;">SystemPOUs</div>
<div class="a" style="left:94px;top:162px;width:7px;height:0;border-top:1px dotted #9a9a9a"></div>
<svg style="left:85px;top:157px" width="9" height="9" viewBox="0 0 9 9" ><rect x="0.5" y="0.5" width="8" height="8" rx="1" fill="#fafcfc" stroke="#9aa6aa"/><path d="M2 4.5H7" stroke="#000"/></svg>
<svg style="left:101px;top:154px" width="16" height="16" viewBox="0 0 16 16" ><path d="M0.5 3.5Q0.5 2.5 1.5 2.5H5.5L7 4H14.5Q15.5 4 15.5 5V12.5Q15.5 13.5 14.5 13.5H1.5Q0.5 13.5 0.5 12.5Z" fill="#f3d36a" stroke="#b8902a"/><path d="M1.5 6H14.5V12.5H1.5Z" fill="#fbeea8"/></svg>
<div class="t" style="left:121.6px;top:157.69px;font-size:11px;letter-spacing:-0.862px;">UserGVLs</div>
<div class="a" style="left:110px;top:181px;width:11px;height:0;border-top:1px dotted #9a9a9a"></div>
<svg style="left:121px;top:173px" width="16" height="16" viewBox="0 0 16 16" ><circle cx="8" cy="7.5" r="6.3" fill="#1f56c8"/><path d="M3.5 4.5Q6 2.5 8.5 3.5Q9.5 5.5 7.5 6.5Q5.5 8.5 4.5 7.5Q3 6.5 3.5 4.5Z M9.5 7.5Q12 6.5 13 8.5Q12.5 11.5 10.5 12Q9 10 9.5 7.5Z" fill="#39b54a"/><circle cx="6" cy="4.5" r="1.6" fill="#9cc4ff" opacity=".7"/><path d="M1.2 13.5Q-0.5 10.5 6 5M10 3Q15.5 -0.5 15 3.5" stroke="#8a98a8" stroke-width="1.2" fill="none"/><path d="M1.2 13.5Q5 15.5 11 11.5Q15 8 15 3.5" stroke="#556" stroke-width="1.5" fill="none"/></svg>
<div class="t" style="left:141.6px;top:176.69px;font-size:11px;letter-spacing:-0.483px;">Disables</div>
<div class="a" style="left:110px;top:200px;width:11px;height:0;border-top:1px dotted #9a9a9a"></div>
<svg style="left:121px;top:192px" width="16" height="16" viewBox="0 0 16 16" ><circle cx="8" cy="7.5" r="6.3" fill="#1f56c8"/><path d="M3.5 4.5Q6 2.5 8.5 3.5Q9.5 5.5 7.5 6.5Q5.5 8.5 4.5 7.5Q3 6.5 3.5 4.5Z M9.5 7.5Q12 6.5 13 8.5Q12.5 11.5 10.5 12Q9 10 9.5 7.5Z" fill="#39b54a"/><circle cx="6" cy="4.5" r="1.6" fill="#9cc4ff" opacity=".7"/><path d="M1.2 13.5Q-0.5 10.5 6 5M10 3Q15.5 -0.5 15 3.5" stroke="#8a98a8" stroke-width="1.2" fill="none"/><path d="M1.2 13.5Q5 15.5 11 11.5Q15 8 15 3.5" stroke="#556" stroke-width="1.5" fill="none"/></svg>
<div class="t" style="left:141.6px;top:195.69px;font-size:11px;letter-spacing:-0.274px;">Qualities</div>
<div class="a" style="left:110px;top:219px;width:11px;height:0;border-top:1px dotted #9a9a9a"></div>
<svg style="left:121px;top:211px" width="16" height="16" viewBox="0 0 16 16" ><circle cx="8" cy="7.5" r="6.3" fill="#1f56c8"/><path d="M3.5 4.5Q6 2.5 8.5 3.5Q9.5 5.5 7.5 6.5Q5.5 8.5 4.5 7.5Q3 6.5 3.5 4.5Z M9.5 7.5Q12 6.5 13 8.5Q12.5 11.5 10.5 12Q9 10 9.5 7.5Z" fill="#39b54a"/><circle cx="6" cy="4.5" r="1.6" fill="#9cc4ff" opacity=".7"/><path d="M1.2 13.5Q-0.5 10.5 6 5M10 3Q15.5 -0.5 15 3.5" stroke="#8a98a8" stroke-width="1.2" fill="none"/><path d="M1.2 13.5Q5 15.5 11 11.5Q15 8 15 3.5" stroke="#556" stroke-width="1.5" fill="none"/></svg>
<div class="t" style="left:141.6px;top:214.69px;font-size:11px;letter-spacing:-0.326px;">ReqDiagnostics</div>
<div class="a" style="left:94px;top:238px;width:7px;height:0;border-top:1px dotted #9a9a9a"></div>
<svg style="left:85px;top:233px" width="9" height="9" viewBox="0 0 9 9" ><rect x="0.5" y="0.5" width="8" height="8" rx="1" fill="#fafcfc" stroke="#9aa6aa"/><path d="M2 4.5H7" stroke="#000"/></svg>
<svg style="left:101px;top:230px" width="16" height="16" viewBox="0 0 16 16" ><path d="M0.5 3.5Q0.5 2.5 1.5 2.5H5.5L7 4H14.5Q15.5 4 15.5 5V12.5Q15.5 13.5 14.5 13.5H1.5Q0.5 13.5 0.5 12.5Z" fill="#f3d36a" stroke="#b8902a"/><path d="M1.5 6H14.5V12.5H1.5Z" fill="#fbeea8"/></svg>
<div class="t" style="left:121.6px;top:233.69px;font-size:11px;letter-spacing:-0.680px;">UserPOUs</div>
<div class="a" style="left:110px;top:257px;width:11px;height:0;border-top:1px dotted #9a9a9a"></div>
<svg style="left:121px;top:249px" width="16" height="16" viewBox="0 0 16 16" ><path d="M1.5 0.5H9.5L13.5 4.5V15.5H1.5Z" fill="#fff" stroke="#222"/><path d="M9.5 0.5V4.5H13.5" fill="none" stroke="#222"/><path d="M1.5 8H5M8 8H11.5" stroke="#1212e8" stroke-width="1.6"/><path d="M5 4.5V11.5M8.5 4.5V11.5" stroke="#1212e8" stroke-width="2.2"/></svg>
<div class="t" style="left:141.6px;top:252.69px;font-size:11px;letter-spacing:-0.321px;">StartPrg (PRG)</div>
<div class="a" style="left:110px;top:276px;width:11px;height:0;border-top:1px dotted #9a9a9a"></div>
<svg style="left:121px;top:268px" width="16" height="16" viewBox="0 0 16 16" ><path d="M1.5 0.5H9.5L13.5 4.5V15.5H1.5Z" fill="#fff" stroke="#222"/><path d="M9.5 0.5V4.5H13.5" fill="none" stroke="#222"/><path d="M1.5 8H5M8 8H11.5" stroke="#1212e8" stroke-width="1.6"/><path d="M5 4.5V11.5M8.5 4.5V11.5" stroke="#1212e8" stroke-width="2.2"/></svg>
<div class="t" style="left:141.6px;top:271.69px;font-size:11px;letter-spacing:-0.481px;">UserPrg (PRG)</div>
<div class="a" style="left:90px;top:295px;width:11px;height:0;border-top:1px dotted #9a9a9a"></div>
<svg style="left:101px;top:287px" width="16" height="16" viewBox="0 0 16 16" ><rect x="0.5" y="3.5" width="4" height="11" fill="#21a0a0" stroke="#111"/><path d="M.5 3.5L2.5 1.5H6L4.5 3.5" fill="#5cc" stroke="#111"/><rect x="4.5" y="5.5" width="4" height="9" fill="#e02020" stroke="#111"/><path d="M4.5 5.5L6.5 3.5H10L8.5 5.5" fill="#f77" stroke="#111"/><rect x="8.5" y="4.5" width="3" height="10" fill="#3a3ad0" stroke="#111"/><rect x="11.5" y="3.5" width="4" height="11" fill="#f0e020" stroke="#111"/><path d="M11.5 3.5L13 1.5H16" fill="none" stroke="#111"/></svg>
<div class="t" style="left:121.6px;top:290.69px;font-size:11px;letter-spacing:-0.207px;">Library Manager</div>
<div class="a" style="left:94px;top:314px;width:7px;height:0;border-top:1px dotted #9a9a9a"></div>
<svg style="left:85px;top:309px" width="9" height="9" viewBox="0 0 9 9" ><rect x="0.5" y="0.5" width="8" height="8" rx="1" fill="#fafcfc" stroke="#9aa6aa"/><path d="M2 4.5H7" stroke="#000"/></svg>
<svg style="left:101px;top:306px" width="16" height="16" viewBox="0 0 16 16" ><path d="M0.5 3.5L2.5 1.5H14.5V11.5L12.5 13.5H0.5Z" fill="#c4c4c4" stroke="#444"/><path d="M.5 3.5H12.5V13.5M12.5 3.5L14.5 1.5M4.5 3.5V13.5M8.5 3.5V13.5" stroke="#444" fill="none"/><rect x="2" y="6" width="1.5" height="1.5" fill="#0a0"/><rect x="6" y="6" width="1.5" height="1.5" fill="#c00"/><rect x="10" y="6" width="1.5" height="1.5" fill="#c00"/><circle cx="9" cy="11" r="3.4" fill="#f5d000" stroke="#9a7b00" stroke-width="1.4" stroke-dasharray="1.6 1.1"/><circle cx="9" cy="11" r="1.2" fill="#fff"/></svg>
<div class="t" style="left:121.6px;top:309.69px;font-size:11px;letter-spacing:-0.082px;">Task Configuration</div>
<div class="a" style="left:114px;top:333px;width:7px;height:0;border-top:1px dotted #9a9a9a"></div>
<svg style="left:105px;top:328px" width="9" height="9" viewBox="0 0 9 9" ><rect x="0.5" y="0.5" width="8" height="8" rx="1" fill="#fafcfc" stroke="#9aa6aa"/><path d="M2 4.5H7" stroke="#000"/></svg>
<svg style="left:121px;top:325px" width="16" height="16" viewBox="0 0 16 16" ><path d="M1 11L7 8.5 15 11 9 14Z" fill="#fff" stroke="#222" stroke-width=".8"/><path d="M1 9L7 6.5 15 9 9 12Z" fill="#fff" stroke="#222" stroke-width=".8"/><path d="M1 7L7 4.5 15 7 9 10Z" fill="#fff" stroke="#222" stroke-width=".8"/><path d="M8 0V5M5.5 3L8 6 10.5 3Z" stroke="#114" fill="#22a"/></svg>
<div class="t" style="left:141.6px;top:328.69px;font-size:11px;letter-spacing:-0.366px;">MainTask</div>
<div class="a" style="left:130px;top:352px;width:11px;height:0;border-top:1px dotted #9a9a9a"></div>
<svg style="left:141px;top:344px" width="16" height="16" viewBox="0 0 16 16" ><path d="M3.5 0.5H11.5L14.5 3.5V15.5H3.5Z" fill="#fff" stroke="#222"/><rect x="6.5" y="2.5" width="4" height="5" fill="none" stroke="#c02020"/><rect x="8.5" y="8.5" width="4" height="4" fill="none" stroke="#2020c0"/><rect x="0.5" y="8.5" width="4" height="4" fill="#fff" stroke="#109010"/><path d="M4.5 10.5H8.5M8.5 7.5V8.5" stroke="#555"/></svg>
<div class="t" style="left:161.6px;top:347.69px;font-size:11px;letter-spacing:-0.577px;">MainPrg</div>
<div class="a" style="left:54px;top:371px;width:7px;height:0;border-top:1px dotted #9a9a9a"></div>
<svg style="left:45px;top:366px" width="9" height="9" viewBox="0 0 9 9" ><rect x="0.5" y="0.5" width="8" height="8" rx="1" fill="#fafcfc" stroke="#9aa6aa"/><path d="M2 4.5H7" stroke="#000"/></svg>
<svg style="left:61px;top:363px" width="16" height="16" viewBox="0 0 16 16" ><path d="M1.5 3.5L3.5 1.5H13.5V12.5L11.5 14.5H1.5Z" fill="#c8c8c8" stroke="#444"/><path d="M1.5 3.5H11.5V14.5M11.5 3.5L13.5 1.5M6.5 3.5V14.5" stroke="#444" fill="none"/><rect x="3" y="6" width="2" height="2" fill="#0a0"/><rect x="8" y="6" width="2" height="2" fill="#c00"/></svg>
<div class="t" style="left:81.6px;top:366.69px;font-size:11px;letter-spacing:-0.489px;">CPU (XF325-W)</div>
<div class="a" style="left:70px;top:390px;width:11px;height:0;border-top:1px dotted #9a9a9a"></div>
<svg style="left:81px;top:382px" width="16" height="16" viewBox="0 0 16 16" ><path d="M1 1H5L9 7" stroke="#1a2ae0" stroke-width="2" fill="none"/><ellipse cx="9" cy="11.5" rx="4.2" ry="2.6" fill="#9a9a9a" stroke="#222" stroke-width=".8"/><path d="M7 7.5H11L12 11H6Z" fill="#ddd" stroke="#222" stroke-width=".8"/></svg>
<div class="t" style="left:101.6px;top:385.69px;font-size:11px;letter-spacing:-0.659px;">COM 1</div>
<div class="a" style="left:70px;top:409px;width:11px;height:0;border-top:1px dotted #9a9a9a"></div>
<svg style="left:81px;top:401px" width="16" height="16" viewBox="0 0 16 16" ><path d="M1 1H5L9 7" stroke="#1a2ae0" stroke-width="2" fill="none"/><ellipse cx="9" cy="11.5" rx="4.2" ry="2.6" fill="#9a9a9a" stroke="#222" stroke-width=".8"/><path d="M7 7.5H11L12 11H6Z" fill="#ddd" stroke="#222" stroke-width=".8"/></svg>
<div class="t" style="left:101.6px;top:404.69px;font-size:11px;letter-spacing:-0.719px;">NET 1</div>
<div class="a" style="left:70px;top:428px;width:11px;height:0;border-top:1px dotted #9a9a9a"></div>
<svg style="left:81px;top:420px" width="16" height="16" viewBox="0 0 16 16" ><path d="M1 1H5L9 7" stroke="#1a2ae0" stroke-width="2" fill="none"/><ellipse cx="9" cy="11.5" rx="4.2" ry="2.6" fill="#9a9a9a" stroke="#222" stroke-width=".8"/><path d="M7 7.5H11L12 11H6Z" fill="#ddd" stroke="#222" stroke-width=".8"/></svg>
<div class="t" style="left:101.6px;top:423.69px;font-size:11px;letter-spacing:-0.719px;">NET 2</div>
<div class="a" style="left:70px;top:447px;width:11px;height:0;border-top:1px dotted #9a9a9a"></div>
<svg style="left:81px;top:439px" width="16" height="16" viewBox="0 0 16 16" ><path d="M1 1H5L9 7" stroke="#1a2ae0" stroke-width="2" fill="none"/><ellipse cx="9" cy="11.5" rx="4.2" ry="2.6" fill="#9a9a9a" stroke="#222" stroke-width=".8"/><path d="M7 7.5H11L12 11H6Z" fill="#ddd" stroke="#222" stroke-width=".8"/></svg>
<div class="t" style="left:101.6px;top:442.69px;font-size:11px;letter-spacing:-1.162px;">CAN</div>
<div class="a" style="left:70px;top:466px;width:11px;height:0;border-top:1px dotted #9a9a9a"></div>
<svg style="left:81px;top:458px" width="16" height="16" viewBox="0 0 16 16" ><path d="M1 1H5L9 7" stroke="#1a2ae0" stroke-width="2" fill="none"/><ellipse cx="9" cy="11.5" rx="4.2" ry="2.6" fill="#9a9a9a" stroke="#222" stroke-width=".8"/><path d="M7 7.5H11L12 11H6Z" fill="#ddd" stroke="#222" stroke-width=".8"/></svg>
<div class="t" style="left:101.6px;top:461.69px;font-size:11px;letter-spacing:-1.860px;">BUS</div>
</div>
<div class="a" style="left:1px;top:815px;width:247px;height:16px;background:#f0f0f0"></div>
<div class="a" style="left:18px;top:822px;width:178px;height:2px;background:#8a8a8a"></div>
<div class="a" style="left:0px;top:832px;width:66px;height:23px;background:#fff;border:1px solid #9a9a9a;border-top:none;border-left:none;border-radius:0 0 3px 0"></div>
<div class="a" style="left:66px;top:834px;width:183px;height:1px;background:#b4b4b4"></div>
<div class="t" style="left:22px;top:838.69px;font-size:11px;letter-spacing:-0.270px;">Devices</div>
<div class="t" style="left:87px;top:838.69px;font-size:11px;letter-spacing:-0.946px;color:#555;">POUs</div>
<svg style="left:3px;top:837px" width="17" height="15" viewBox="0 0 17 15" ><rect x="2" y="1" width="12" height="4" rx="1" fill="#d8d8d8" stroke="#666"/><rect x="1" y="5" width="14" height="4" rx="1" fill="#c0c0c0" stroke="#555"/><path d="M8 9V12M1 12.5H15" stroke="#555"/><rect x="6" y="10" width="5" height="4" fill="#f5c020" stroke="#a07800"/></svg>
<svg style="left:69px;top:836px" width="16" height="18" viewBox="0 0 16 18" ><path d="M1.5 3.5H9.5V16.5H1.5Z" fill="#fff" stroke="#666"/><path d="M4.5 1.5H10.5L14.5 5.5V15.5H4.5Z" fill="#dfe9fb" stroke="#556"/><path d="M10.5 1.5V5.5H14.5" fill="none" stroke="#556"/><path d="M6 8.5H12M6 10.5H12M6 12.5H12" stroke="#7a9ad8"/></svg>
<div class="a" style="left:253px;top:97px;width:1143px;height:1px;background:#a6a6a6;"></div>
<div class="a" style="left:253px;top:97px;width:1px;height:759px;background:#9a9a9a;"></div>
<div class="a" style="left:1395px;top:97px;width:1px;height:759px;background:#9a9a9a;"></div>
<div class="a" style="left:254px;top:117px;width:1141px;height:1px;background:#a0a0a0;"></div>
<svg style="left:256px;top:100px" width="110" height="18" viewBox="0 0 110 18" ><path d="M1 17.5L17 1.5Q18 0.5 19.5 0.5H105Q108.5 0.5 108.5 4V17.5" fill="#fff" stroke="#a0a0a0"/><path d="M1.5 17.5H108" stroke="#fff"/></svg>
<svg style="left:274px;top:102.6px" width="14" height="16" viewBox="0 0 14 16" ><path d="M0.5 0.5H8.5L12.5 4.5V14.5H0.5Z" fill="#fff" stroke="#222"/><path d="M8.5 0.5V4.5H12.5" fill="none" stroke="#222"/><path d="M1 8H4M7.5 8H11" stroke="#1212e8" stroke-width="1.6"/><path d="M4.2 4.5V11.5M7.8 4.5V11.5" stroke="#1212e8" stroke-width="2.2"/><path d="M1 13.5H12V14.5H1Z" fill="#222"/></svg>
<div class="t b" style="left:296px;top:103.35px;font-size:11.4px;letter-spacing:0.058px;">UserPrg</div>
<svg style="left:351px;top:106px" width="9" height="8" viewBox="0 0 9 8" ><path d="M1 0.5L7.5 7M7.5 0.5L1 7" stroke="#000" stroke-width="2" fill="none"/></svg>
<svg style="left:1381px;top:107px" width="8" height="5" viewBox="0 0 8 5" ><path d="M0 0H8L4 4.5Z" fill="#000"/></svg>
<div class="a" style="left:254px;top:118px;width:1141px;height:100px;background:#fff;"></div>
<div class="a" style="left:301px;top:118px;width:1px;height:100px;background:#d4d4d4;"></div>
<div class="t m" style="left:293.5px;top:122.95px;font-size:10.5px;color:#4a86b8;">9</div>
<div class="t m" style="left:324.6px;top:123.57px;font-size:11px;letter-spacing:0.4px;white-space:pre;color:#111;">    SET_PV: <span class="kw">WORD;</span></div>
<div class="t m" style="left:286.2px;top:139.95px;font-size:10.5px;letter-spacing:1.398px;color:#4a86b8;">10</div>
<div class="t m" style="left:324.6px;top:140.57px;font-size:11px;letter-spacing:0.4px;white-space:pre;color:#111;">    Pulse_Count: <span class="kw">WORD;</span></div>
<div class="t m" style="left:286.2px;top:156.95px;font-size:10.5px;letter-spacing:1.398px;color:#4a86b8;">11</div>
<div class="t m" style="left:324.6px;top:157.57px;font-size:11px;letter-spacing:0.4px;white-space:pre;color:#111;">    MOTOR: <span class="kw">BOOL;</span></div>
<div class="t m" style="left:286.2px;top:173.95px;font-size:10.5px;letter-spacing:1.398px;color:#a02828;">12</div>
<div class="t m" style="left:324.6px;top:174.57px;font-size:11px;letter-spacing:0.4px;white-space:pre;color:#111;">    Output_1: <span class="kw">BOOL;</span></div>
<div class="t m" style="left:286.2px;top:190.95px;font-size:10.5px;letter-spacing:1.398px;color:#4a86b8;">13</div>
<div class="t m" style="left:324.6px;top:191.57px;font-size:11px;letter-spacing:0.4px;white-space:pre;color:#111;"><span class="kw">END_VAR</span></div>
<div class="a" style="left:1355px;top:120px;width:16px;height:98px;background:#f0f0f0;"></div>
<div class="a" style="left:1362px;top:173px;width:2px;height:23px;background:#8a8a8a;"></div>
<div class="a" style="left:1371px;top:120px;width:23px;height:98px;background:linear-gradient(90deg,#fcfcf8,#e4e4d8 55%,#c6c6b2);border-radius:0 3px 3px 0"></div>
<div class="a" style="left:1371px;top:121px;width:20px;height:20px;background:#e3eefb;border:1px solid #5a96d8"></div>
<svg style="left:1374px;top:124px" width="14" height="14" viewBox="0 0 14 14" ><path d="M1 1.5H9M4 3.5H11M4 5.5H9M1 7.5H8M4 9.5H12M4 11.5H9M1 13.5H8" stroke="#222"/><path d="M4 5.5H9" stroke="#2a2ad8"/><path d="M4 11.5H9" stroke="#1a8a1a"/></svg>
<svg style="left:1373px;top:146px" width="16" height="16" viewBox="0 0 16 16" ><rect x="0.5" y="0.5" width="14" height="14" fill="#fff" stroke="#444"/><rect x="1" y="1" width="13" height="3" fill="#3a50c8"/><path d="M.5 7.5H14.5M.5 11H14.5M5.2 4V14.5M9.8 4V14.5" stroke="#666"/></svg>
<div class="a" style="left:1286px;top:198px;width:48px;height:20px;background:#f0f0f0;border:1px solid #a8a8a8"></div>
<div class="t" style="left:1301px;top:204.53px;font-size:10px;letter-spacing:-0.094px;color:#223;">100</div>
<div class="a" style="left:1334px;top:198px;width:21px;height:20px;background:#f0f0f0;border:1px solid #a8a8a8"></div>
<svg style="left:1336px;top:201px" width="17" height="16" viewBox="0 0 17 16" ><path d="M1.5 3.5H8.5V14.5H1.5Z" fill="#fff" stroke="#333"/><path d="M3 7.5H7M3 9.5H7M3 11.5H6" stroke="#888"/><circle cx="8.5" cy="5.5" r="4" fill="#d8eef8" fill-opacity=".8" stroke="#111" stroke-width="1.4"/><path d="M11.5 8.5L16 14" stroke="#111" stroke-width="2.4"/></svg>
<div class="a" style="left:254px;top:218px;width:1141px;height:1px;background:#a8a8a8;"></div>
<div class="a" style="left:254px;top:219px;width:1141px;height:4px;background:#f0f0f0;"></div>
<div class="a" style="left:253px;top:218px;width:2px;height:6px;background:#8a8a8a;"></div>
<div class="a" style="left:254px;top:223px;width:1141px;height:1px;background:#b4b4b4;"></div>
<svg style="left:812.5px;top:218.6px" width="26" height="5" viewBox="0 0 26 5" ><path d="M0 4.5L4 0.5 8 4.5Z" fill="#8a8a8a" stroke="#555" stroke-width=".6"/><path d="M16 0.5H24L20 4.5Z" fill="#8a8a8a" stroke="#555" stroke-width=".6"/></svg>
<div class="a" style="left:254px;top:224px;width:1141px;height:615px;background:#fff;"></div>
<div class="a" style="left:315px;top:224px;width:1080px;height:232px;background:#ffffe1;"></div>
<div class="a" style="left:299px;top:456px;width:1096px;height:1px;background:#cfcfcf;"></div>
<div class="a" style="left:297px;top:689px;width:1098px;height:1px;background:#d4d4d4;"></div>
<div class="a" style="left:256px;top:226px;width:39px;height:229px;background:#f8e1e8;border:1px dotted #4a4a4a;border-bottom:1px solid #8c8c8c"></div>
<div class="a" style="left:299px;top:227px;width:14px;height:463px;background:#f4f4f4;"></div>
<div class="a" style="left:297px;top:227px;width:2px;height:463px;background:#008080;"></div>
<div class="a" style="left:324px;top:227px;width:1px;height:463px;background:#000;"></div>
<div class="t b" style="left:289.3px;top:225.80px;font-size:8.5px;color:#1e9cc8;">1</div>
<div class="t b" style="left:289.4px;top:458.80px;font-size:8.5px;color:#1a8a9c;">2</div>
<div class="a" style="left:429px;top:289px;width:113px;height:151px;background:#e3e8f7;border:1px solid #2c4a86"></div>
<div class="a" style="left:453px;top:257px;width:65px;height:16px;background:#d0d0d0;"></div>
<div class="t m" style="left:468.7px;top:276.13px;font-size:10px;color:#111;letter-spacing:0.6px;-webkit-text-stroke:0.12px currentColor;">CTU_0</div>
<div class="t m b" style="left:475.3px;top:295.13px;font-size:10px;color:#111;letter-spacing:0.6px;-webkit-text-stroke:0.12px currentColor;">CTU</div>
<svg style="left:472px;top:304px" width="28" height="25" viewBox="0 0 28 25" ><path d="M0.5 5V1.5H3V4.5H6V1.5H9V4.5H12V1.5H15V4.5H18V1.5H21V4.5H24V1.5H27.5V5" stroke="#2a9a2a" fill="none"/><rect x="0.5" y="6.5" width="27" height="9" fill="#b8b8b8" stroke="#666"/><path d="M9.5 6.5V15.5M18.5 6.5V15.5" stroke="#666"/><text x="14" y="14.6" text-anchor="middle" font-family="Liberation Mono,monospace" font-size="10.5" fill="#f02020" textLength="24" lengthAdjust="spacingAndGlyphs">728</text><path d="M14 24.5V19.5" stroke="#f01818" stroke-width="2"/><path d="M11.2 21L14 17.5 16.8 21Z" fill="#f01818"/></svg>
<div class="t m" style="left:432.4px;top:309.13px;font-size:10px;color:#111;letter-spacing:0.6px;-webkit-text-stroke:0.12px currentColor;">CU</div>
<div class="t m" style="left:530.7px;top:309.13px;font-size:10px;color:#111;letter-spacing:0.6px;-webkit-text-stroke:0.12px currentColor;">Q</div>
<div class="t m" style="left:432.4px;top:374.13px;font-size:10px;color:#111;letter-spacing:0.6px;-webkit-text-stroke:0.12px currentColor;">RESET</div>
<div class="t m" style="left:432.4px;top:421.13px;font-size:10px;color:#111;letter-spacing:0.6px;-webkit-text-stroke:0.12px currentColor;">PV</div>
<div class="a" style="left:341px;top:272px;width:65px;height:16px;background:#d0d0d0;"></div>
<div class="t m" style="left:347.7px;top:292.13px;font-size:10px;color:#111;letter-spacing:0.6px;-webkit-text-stroke:0.12px currentColor;">Input_00</div>
<div class="a" style="left:325px;top:311px;width:40px;height:1px;background:#000;"></div>
<div class="a" style="left:382px;top:311px;width:47px;height:1px;background:#000;"></div>
<div class="a" style="left:365px;top:304px;width:3px;height:15px;background:#eef2fb;border:1px solid #3a5a9a"></div><div class="a" style="left:378px;top:304px;width:4px;height:15px;background:#eef2fb;border:1px solid #3a5a9a"></div>
<div class="a" style="left:341px;top:337px;width:65px;height:16px;background:#d0d0d0;"></div>
<div class="t m" style="left:357.3px;top:356.13px;font-size:10px;color:#111;letter-spacing:0.6px;-webkit-text-stroke:0.12px currentColor;">RESET</div>
<div class="a" style="left:325px;top:376px;width:40px;height:1px;background:#000;"></div>
<div class="a" style="left:382px;top:376px;width:47px;height:1px;background:#000;"></div>
<div class="a" style="left:365px;top:369px;width:3px;height:15px;background:#eef2fb;border:1px solid #3a5a9a"></div><div class="a" style="left:378px;top:369px;width:4px;height:15px;background:#eef2fb;border:1px solid #3a5a9a"></div>
<div class="a" style="left:349px;top:402px;width:65px;height:16px;background:#d0d0d0;"></div>
<div class="t m" style="left:397.40000000000003px;top:421.13px;font-size:10px;color:#8a8a00;letter-spacing:0.6px;-webkit-text-stroke:0.12px currentColor;">10</div>
<div class="a" style="left:414px;top:424px;width:15px;height:1px;background:#000;"></div>
<div class="a" style="left:429px;top:522px;width:113px;height:151px;background:#e3e8f7;border:1px solid #2c4a86"></div>
<div class="a" style="left:453px;top:490px;width:65px;height:16px;background:#d0d0d0;"></div>
<div class="t m" style="left:468.7px;top:509.13px;font-size:10px;color:#111;letter-spacing:0.6px;-webkit-text-stroke:0.12px currentColor;">CTU_1</div>
<div class="t m b" style="left:475.3px;top:528.13px;font-size:10px;color:#111;letter-spacing:0.6px;-webkit-text-stroke:0.12px currentColor;">CTU</div>
<svg style="left:472px;top:537px" width="28" height="25" viewBox="0 0 28 25" ><path d="M0.5 5V1.5H3V4.5H6V1.5H9V4.5H12V1.5H15V4.5H18V1.5H21V4.5H24V1.5H27.5V5" stroke="#2a9a2a" fill="none"/><rect x="0.5" y="6.5" width="27" height="9" fill="#b8b8b8" stroke="#666"/><path d="M9.5 6.5V15.5M18.5 6.5V15.5" stroke="#666"/><text x="14" y="14.6" text-anchor="middle" font-family="Liberation Mono,monospace" font-size="10.5" fill="#f02020" textLength="24" lengthAdjust="spacingAndGlyphs">728</text><path d="M14 24.5V19.5" stroke="#f01818" stroke-width="2"/><path d="M11.2 21L14 17.5 16.8 21Z" fill="#f01818"/></svg>
<div class="t m" style="left:432.4px;top:542.13px;font-size:10px;color:#111;letter-spacing:0.6px;-webkit-text-stroke:0.12px currentColor;">CU</div>
<div class="t m" style="left:530.7px;top:542.13px;font-size:10px;color:#111;letter-spacing:0.6px;-webkit-text-stroke:0.12px currentColor;">Q</div>
<div class="t m" style="left:432.4px;top:607.13px;font-size:10px;color:#111;letter-spacing:0.6px;-webkit-text-stroke:0.12px currentColor;">RESET</div>
<div class="t m" style="left:432.4px;top:654.13px;font-size:10px;color:#111;letter-spacing:0.6px;-webkit-text-stroke:0.12px currentColor;">PV</div>
<div class="a" style="left:341px;top:505px;width:65px;height:16px;background:#d0d0d0;"></div>
<div class="t m" style="left:347.7px;top:525.13px;font-size:10px;color:#111;letter-spacing:0.6px;-webkit-text-stroke:0.12px currentColor;">Input_00</div>
<div class="a" style="left:325px;top:544px;width:40px;height:1px;background:#000;"></div>
<div class="a" style="left:382px;top:544px;width:47px;height:1px;background:#000;"></div>
<div class="a" style="left:365px;top:537px;width:3px;height:15px;background:#eef2fb;border:1px solid #3a5a9a"></div><div class="a" style="left:378px;top:537px;width:4px;height:15px;background:#eef2fb;border:1px solid #3a5a9a"></div>
<div class="a" style="left:341px;top:570px;width:65px;height:16px;background:#d0d0d0;"></div>
<div class="t m" style="left:350.7px;top:589.13px;font-size:10px;color:#111;letter-spacing:0.6px;-webkit-text-stroke:0.12px currentColor;">RESET_2</div>
<div class="a" style="left:325px;top:609px;width:40px;height:1px;background:#000;"></div>
<div class="a" style="left:382px;top:609px;width:47px;height:1px;background:#000;"></div>
<div class="a" style="left:365px;top:602px;width:3px;height:15px;background:#eef2fb;border:1px solid #3a5a9a"></div><div class="a" style="left:378px;top:602px;width:4px;height:15px;background:#eef2fb;border:1px solid #3a5a9a"></div>
<div class="a" style="left:349px;top:635px;width:65px;height:16px;background:#d0d0d0;"></div>
<div class="t m" style="left:371.00000000000006px;top:654.13px;font-size:10px;color:#111;letter-spacing:0.6px;-webkit-text-stroke:0.12px currentColor;">SET_PV</div>
<div class="a" style="left:414px;top:657px;width:15px;height:1px;background:#000;"></div>
<div class="t m" style="left:524.6px;top:325.13px;font-size:10px;color:#111;letter-spacing:0.6px;-webkit-text-stroke:0.12px currentColor;">CV</div>
<div class="a" style="left:542px;top:311px;width:27px;height:1px;background:#000;"></div>
<div class="a" style="left:542px;top:327px;width:7px;height:1px;background:#000;"></div>
<div class="a" style="left:549px;top:321px;width:17px;height:15px;background:#ffffea;border:1px solid #dedef4"></div>
<div class="t m" style="left:524.6px;top:574.63px;font-size:10px;color:#111;letter-spacing:0.6px;-webkit-text-stroke:0.12px currentColor;">CV</div>
<div class="a" style="left:542px;top:544px;width:668px;height:1px;background:#000;"></div>
<div class="a" style="left:542px;top:577px;width:7px;height:1px;background:#000;"></div>
<div class="a" style="left:550px;top:555px;width:64px;height:16px;background:#d0d0d0;"></div>
<div class="t m" style="left:553.5px;top:574.63px;font-size:10px;color:#111;letter-spacing:0.6px;-webkit-text-stroke:0.12px currentColor;">Pulse_Count</div>
<div class="a" style="left:1185px;top:505px;width:65px;height:16px;background:#d0d0d0;"></div>
<div class="t m" style="left:1190.7px;top:525.13px;font-size:10px;color:#111;letter-spacing:0.6px;-webkit-text-stroke:0.12px currentColor;">Output_1</div>
<svg style="left:1208px;top:537px" width="20" height="16" viewBox="0 0 20 16" ><path d="M4.5 0.5Q1.5 4 1.5 8Q1.5 12 4.5 15.5H6Q3.5 12 3.5 8Q3.5 4 6 0.5Z M13.5 0.5Q16.5 4 16.5 8Q16.5 12 13.5 15.5H12Q14.5 12 14.5 8Q14.5 4 12 0.5Z" fill="#eef2fb" stroke="#3a5a9a" stroke-width=".9"/></svg>
<div class="a" style="left:283px;top:224px;width:146px;height:232px;border:3px solid #ff0000;border-radius:2px"></div>
<div class="a" style="left:541px;top:226px;width:108px;height:234px;border:3px solid #ff0000;border-radius:2px"></div>
<div class="a" style="left:306px;top:492px;width:125px;height:198px;border:3px solid #ff0000;border-radius:2px"></div>
<div class="a" style="left:541px;top:492px;width:719px;height:200px;border:3px solid #ff0000;border-radius:2px"></div>
<div class="t" style="left:824px;top:299.79px;font-size:17.5px;letter-spacing:0.177px;color:#ff3333;">Output parameters will always be optional in</div>
<div class="t" style="left:824px;top:323.39px;font-size:17.5px;letter-spacing:0.073px;color:#ff3333;">function blocks because the block's own</div>
<div class="t" style="left:824px;top:346.99px;font-size:17.5px;letter-spacing:0.017px;color:#ff3333;">internal variables can be used to</div>
<div class="t" style="left:824px;top:370.59px;font-size:17.5px;letter-spacing:0.048px;color:#ff3333;">move/analyze the respective value</div>
<div class="a" style="left:254px;top:839px;width:1141px;height:16px;background:#f0f0f0;"></div>
<div class="a" style="left:271px;top:846px;width:44px;height:2px;background:#8a8a8a;"></div>
<div class="a" style="left:253px;top:855px;width:1143px;height:1px;background:#9a9a9a;"></div>
<div class="a" style="left:1250px;top:818px;width:20px;height:20px;background:#fff;border:1px solid #a8a8a8"></div>
<div class="a" style="left:1270px;top:818px;width:20px;height:20px;background:#f0f0f0;border:1px solid #a8a8a8"></div>
<div class="a" style="left:1290px;top:818px;width:20px;height:20px;background:#f0f0f0;border:1px solid #a8a8a8"></div>
<svg style="left:1254px;top:820px" width="12" height="16" viewBox="0 0 12 16" ><path d="M2.5 1V13L5.5 10 8 15 10 14 7.5 9.5H11.5Z" fill="#000"/></svg>
<svg style="left:1273px;top:821px" width="14" height="14" viewBox="0 0 14 14" ><path d="M7 0V14M0 7H14" stroke="#000"/><path d="M5 2.5L7 0 9 2.5ZM5 11.5L7 14 9 11.5ZM2.5 5L0 7 2.5 9ZM11.5 5L14 7 11.5 9Z" fill="#000"/></svg>
<svg style="left:1292px;top:820px" width="16" height="16" viewBox="0 0 16 16" ><circle cx="6" cy="6" r="4.6" fill="#cfe6fa" stroke="#667" stroke-width="1.2"/><path d="M9.5 9.5L14.5 14.5" stroke="#c89a20" stroke-width="2.6" stroke-linecap="round"/></svg>
<div class="a" style="left:1330px;top:818px;width:45px;height:20px;background:#f0f0f0;border:1px solid #b0b0b0"></div>
<div class="t" style="left:1338px;top:823.99px;font-size:11px;letter-spacing:0.309px;color:#112;">90 %</div>
<div class="a" style="left:1375px;top:818px;width:20px;height:20px;background:#f0f0f0;border:1px solid #b0b0b0"></div>
<svg style="left:1377px;top:820px" width="17" height="16" viewBox="0 0 17 16" ><path d="M1.5 3.5H8.5V14.5H1.5Z" fill="#fff" stroke="#333"/><path d="M3 7.5H7M3 9.5H7M3 11.5H6" stroke="#888"/><circle cx="8.5" cy="5.5" r="4" fill="#d8eef8" fill-opacity=".8" stroke="#111" stroke-width="1.4"/><path d="M11.5 8.5L16 14" stroke="#111" stroke-width="2.4"/></svg>
<div class="a" style="left:1400px;top:98px;width:199px;height:758px;background:#f0f0f0;border-left:1px solid #8a8a8a;border-bottom:1px solid #8a8a8a"></div>
<div class="a" style="left:1401px;top:97px;width:198px;height:24px;background:#bfcddb;border-top:1px solid #dfe6ee;border-bottom:1px solid #8a96a3"></div>
<div class="t" style="left:1406px;top:103.69px;font-size:11px;letter-spacing:-0.355px;">ToolBox</div>
<svg style="left:1543px;top:106px" width="50" height="10" viewBox="0 0 50 10" ><path d="M0 2H8L4 6Z" fill="#000"/><path d="M22.5 0.5H26.5V5.5H22.5Z M21 5.5H28 M24.5 6V9.5" stroke="#000" fill="none"/><path d="M25.5 1V5" stroke="#000"/><path d="M41.5 0.5L48 7 M48 0.5L41.5 7" stroke="#000" stroke-width="2.2" fill="none"/></svg>
<svg style="left:1407px;top:126px" width="9" height="9" viewBox="0 0 9 9" ><rect x="0.5" y="0.5" width="8" height="8" rx="1" fill="#fafcfc" stroke="#9aa6aa"/><path d="M2 4.5H7" stroke="#000"/><path d="M4.5 2V7" stroke="#000"/></svg>
<div class="t b" style="left:1424.3px;top:125.97px;font-size:11.5px;letter-spacing:0.212px;">General</div>
<svg style="left:1407px;top:145px" width="9" height="9" viewBox="0 0 9 9" ><rect x="0.5" y="0.5" width="8" height="8" rx="1" fill="#fafcfc" stroke="#9aa6aa"/><path d="M2 4.5H7" stroke="#000"/><path d="M4.5 2V7" stroke="#000"/></svg>
<div class="t b" style="left:1424.3px;top:144.97px;font-size:11.5px;letter-spacing:0.179px;">Boolean Operators</div>
<svg style="left:1407px;top:164px" width="9" height="9" viewBox="0 0 9 9" ><rect x="0.5" y="0.5" width="8" height="8" rx="1" fill="#fafcfc" stroke="#9aa6aa"/><path d="M2 4.5H7" stroke="#000"/><path d="M4.5 2V7" stroke="#000"/></svg>
<div class="t b" style="left:1424.3px;top:163.97px;font-size:11.5px;letter-spacing:0.354px;">Math Operators</div>
<svg style="left:1407px;top:183px" width="9" height="9" viewBox="0 0 9 9" ><rect x="0.5" y="0.5" width="8" height="8" rx="1" fill="#fafcfc" stroke="#9aa6aa"/><path d="M2 4.5H7" stroke="#000"/><path d="M4.5 2V7" stroke="#000"/></svg>
<div class="t b" style="left:1424.3px;top:182.97px;font-size:11.5px;letter-spacing:0.348px;">Other Operators</div>
<svg style="left:1407px;top:202px" width="9" height="9" viewBox="0 0 9 9" ><rect x="0.5" y="0.5" width="8" height="8" rx="1" fill="#fafcfc" stroke="#9aa6aa"/><path d="M2 4.5H7" stroke="#000"/></svg>
<div class="t b" style="left:1424.3px;top:201.97px;font-size:11.5px;letter-spacing:-0.126px;">Function Blocks</div>
<svg style="left:1442px;top:219px" width="16" height="16" viewBox="0 0 16 16" ><rect x="3.5" y="2.5" width="9" height="10" fill="#9898f6" stroke="#1414e6"/><path d="M0 3.5H3.5M12.5 3.5H16" stroke="#1414e6"/><path d="M5.5 10.5H7.5V5.5H10.5" stroke="#000" stroke-width="1.4" fill="none"/></svg>
<div class="t" style="left:1464.4px;top:220.69px;font-size:11px;letter-spacing:-0.647px;color:#1a1a1a;">R_TRIG</div>
<svg style="left:1442px;top:238px" width="16" height="16" viewBox="0 0 16 16" ><rect x="3.5" y="2.5" width="9" height="10" fill="#9898f6" stroke="#1414e6"/><path d="M0 3.5H3.5M12.5 3.5H16" stroke="#1414e6"/><path d="M5.5 5.5H7.5V10.5H10.5" stroke="#000" stroke-width="1.4" fill="none"/></svg>
<div class="t" style="left:1464.4px;top:239.69px;font-size:11px;letter-spacing:-0.642px;color:#1a1a1a;">F_TRIG</div>
<svg style="left:1442px;top:257px" width="16" height="16" viewBox="0 0 16 16" ><rect x="3.5" y="2.5" width="9" height="10" fill="#9898f6" stroke="#1414e6"/><path d="M0 4.5H3.5M0 10.5H3.5M12.5 4.5H16" stroke="#1414e6"/><path d="M5.5 5.5H10.5M5.5 7.5H10.5M5.5 10.5H10.5M8 3.5V11" stroke="#000"/></svg>
<div class="t" style="left:1464.4px;top:258.69px;font-size:11px;letter-spacing:-2.481px;color:#1a1a1a;">RS</div>
<svg style="left:1442px;top:276px" width="16" height="16" viewBox="0 0 16 16" ><rect x="3.5" y="2.5" width="9" height="10" fill="#9898f6" stroke="#1414e6"/><path d="M0 4.5H3.5M0 10.5H3.5M12.5 4.5H16" stroke="#1414e6"/><path d="M10 5.5H6.5V9.5H10M5.5 11.5H10.5" stroke="#000" fill="none"/></svg>
<div class="t" style="left:1464.4px;top:277.69px;font-size:11px;letter-spacing:-2.781px;color:#1a1a1a;">SR</div>
<svg style="left:1442px;top:295px" width="16" height="16" viewBox="0 0 16 16" ><rect x="3.5" y="2.5" width="9" height="10" fill="#9898f6" stroke="#1414e6"/><path d="M0 4.5H3.5M0 10.5H3.5M12.5 4.5H16" stroke="#1414e6"/><path d="M12.5 10.5H16" stroke="#1414e6"/><circle cx="8" cy="7.5" r="3" fill="#b8b8f8" stroke="#000" stroke-width="1.1"/><path d="M6.5 9L9.5 6" stroke="#d01010"/></svg>
<div class="t" style="left:1464.4px;top:296.69px;font-size:11px;letter-spacing:-1.210px;color:#1a1a1a;">TON</div>
<svg style="left:1442px;top:314px" width="16" height="16" viewBox="0 0 16 16" ><rect x="3.5" y="2.5" width="9" height="10" fill="#9898f6" stroke="#1414e6"/><path d="M0 4.5H3.5M0 10.5H3.5M12.5 4.5H16" stroke="#1414e6"/><path d="M12.5 10.5H16" stroke="#1414e6"/><circle cx="8" cy="7.5" r="3" fill="#b8b8f8" stroke="#000" stroke-width="1.1"/><path d="M6.5 6L9.5 9" stroke="#d01010"/></svg>
<div class="t" style="left:1464.4px;top:315.69px;font-size:11px;letter-spacing:-1.297px;color:#1a1a1a;">TOF</div>
<div class="a" style="left:1442px;top:331px;width:157px;height:18px;background:#f0f0f0;border:1px solid #bcbcbc;border-right:none"></div>
<svg style="left:1442px;top:333px" width="16" height="16" viewBox="0 0 16 16" ><rect x="3.5" y="2.5" width="9" height="10" fill="#9898f6" stroke="#1414e6"/><path d="M0 4.5H3.5M0 7.5H3.5M0 10.5H3.5M12.5 4.5H16M12.5 7.5H16" stroke="#1414e6"/><path d="M5 7.5H8M6.5 6V9M10 5.5V10" stroke="#000" stroke-width="1.1"/></svg>
<div class="t" style="left:1464.4px;top:334.69px;font-size:11px;letter-spacing:-1.703px;color:#1a1a1a;">CTU</div>
<svg style="left:1442px;top:352px" width="16" height="16" viewBox="0 0 16 16" ><rect x="3.5" y="2.5" width="9" height="10" fill="#9898f6" stroke="#1414e6"/><path d="M0 4.5H3.5M0 7.5H3.5M0 10.5H3.5M12.5 4.5H16M12.5 7.5H16" stroke="#1414e6"/><path d="M5 7.5H8M10 5.5V10" stroke="#000" stroke-width="1.1"/></svg>
<div class="t" style="left:1464.4px;top:353.69px;font-size:11px;letter-spacing:-1.703px;color:#1a1a1a;">CTD</div>
<svg style="left:1407px;top:373px" width="9" height="9" viewBox="0 0 9 9" ><rect x="0.5" y="0.5" width="8" height="8" rx="1" fill="#fafcfc" stroke="#9aa6aa"/><path d="M2 4.5H7" stroke="#000"/></svg>
<div class="t b" style="left:1424.3px;top:372.97px;font-size:11.5px;letter-spacing:0.138px;">Ladder Elements</div>
<svg style="left:1442px;top:390px" width="16" height="16" viewBox="0 0 16 16" ><path d="M0.5 15V1.5H4" stroke="#1414e6" fill="none" stroke-width="1.4"/><path d="M1 8.5H15" stroke="#1414e6"/><path d="M9 2.5H15M9 4.5H15M9 6.5H15" stroke="#778" stroke-dasharray="1 1"/><path d="M5 0V8M1.5 4H8.5M2.5 1.5L7.5 6.5M7.5 1.5L2.5 6.5" stroke="#e8d800" stroke-width="1.2"/></svg>
<div class="t" style="left:1464.4px;top:391.69px;font-size:11px;letter-spacing:0.360px;color:#1a1a1a;">Network</div>
<svg style="left:1442px;top:409px" width="16" height="16" viewBox="0 0 16 16" ><path d="M1 7.5H4.5M10.5 7.5H14" stroke="#1414e6"/><path d="M5 3V12M10 3V12" stroke="#1414e6" stroke-width="2"/></svg>
<div class="t" style="left:1464.4px;top:410.69px;font-size:11px;letter-spacing:0.065px;color:#1a1a1a;">Contact</div>
<svg style="left:1442px;top:428px" width="16" height="16" viewBox="0 0 16 16" ><path d="M0 7.5H3.5M11.5 7.5H15" stroke="#1414e6"/><path d="M4 3V12M11 3V12" stroke="#1414e6" stroke-width="2"/><path d="M6 11.5L9 3.5" stroke="#000" stroke-width="1.3"/></svg>
<div class="t" style="left:1464.4px;top:429.69px;font-size:11px;letter-spacing:0.249px;color:#1a1a1a;">Negated contact</div>
<svg style="left:1442px;top:447px" width="16" height="16" viewBox="0 0 16 16" ><path d="M1 1V7.5H3M13 1V7.5H11" stroke="#1414e6" fill="none"/><path d="M4 4V12M10 4V12" stroke="#1414e6" stroke-width="2"/></svg>
<div class="t" style="left:1464.4px;top:448.69px;font-size:11px;letter-spacing:0.066px;color:#1a1a1a;">Parallel contact</div>
<svg style="left:1442px;top:466px" width="16" height="16" viewBox="0 0 16 16" ><path d="M1 1V7.5H3M14 1V7.5H12" stroke="#1414e6" fill="none"/><path d="M4 4V12M11 4V12" stroke="#1414e6" stroke-width="2"/><path d="M6 11.5L9 4.5" stroke="#000" stroke-width="1.3"/></svg>
<div class="t" style="left:1464.4px;top:467.69px;font-size:11px;letter-spacing:0.151px;color:#1a1a1a;">Parallel negated contact</div>
<svg style="left:1442px;top:485px" width="16" height="16" viewBox="0 0 16 16" ><path d="M0 7.5H2.5M12.5 7.5H15" stroke="#1414e6"/><path d="M5.5 3.5Q2.5 7.5 5.5 11.5M9.5 3.5Q12.5 7.5 9.5 11.5" stroke="#1414e6" stroke-width="2" fill="none"/></svg>
<div class="t" style="left:1464.4px;top:486.69px;font-size:11px;letter-spacing:0.151px;color:#1a1a1a;">Coil</div>
<svg style="left:1442px;top:504px" width="16" height="16" viewBox="0 0 16 16" ><path d="M0 7.5H2.5M12.5 7.5H15" stroke="#1414e6"/><path d="M4.5 3.5Q1.5 7.5 4.5 11.5M10.5 3.5Q13.5 7.5 10.5 11.5" stroke="#1414e6" stroke-width="2" fill="none"/><path d="M9 5.5H6V7.5H9V9.5H6" stroke="#000" fill="none"/></svg>
<div class="t" style="left:1464.4px;top:505.69px;font-size:11px;letter-spacing:0.033px;color:#1a1a1a;">Set coil</div>
<svg style="left:1442px;top:523px" width="16" height="16" viewBox="0 0 16 16" ><path d="M0 7.5H2.5M12.5 7.5H15" stroke="#1414e6"/><path d="M4.5 3.5Q1.5 7.5 4.5 11.5M10.5 3.5Q13.5 7.5 10.5 11.5" stroke="#1414e6" stroke-width="2" fill="none"/><path d="M6 10V5.5H8.5V7.5H6M7.5 7.5L9 10" stroke="#000" fill="none"/></svg>
<div class="t" style="left:1464.4px;top:524.69px;font-size:11px;letter-spacing:0.089px;color:#1a1a1a;">Reset coil</div>
<svg style="left:1442px;top:542px" width="16" height="16" viewBox="0 0 16 16" ><rect x="3.5" y="2.5" width="9" height="10" fill="#9898f6" stroke="#1414e6"/><path d="M0 4.5H3.5M0 10.5H3.5M12.5 4.5H16" stroke="#1414e6"/><path d="M12.5 10.5H16" stroke="#1414e6"/><circle cx="8" cy="7.5" r="3" fill="#b8b8f8" stroke="#000" stroke-width="1.1"/><path d="M6.5 9L9.5 6" stroke="#d01010"/></svg>
<div class="t" style="left:1464.4px;top:543.69px;font-size:11px;letter-spacing:-1.210px;color:#1a1a1a;">TON</div>
<svg style="left:1442px;top:561px" width="16" height="16" viewBox="0 0 16 16" ><rect x="3.5" y="2.5" width="9" height="10" fill="#9898f6" stroke="#1414e6"/><path d="M0 4.5H3.5M0 10.5H3.5M12.5 4.5H16" stroke="#1414e6"/><path d="M12.5 10.5H16" stroke="#1414e6"/><circle cx="8" cy="7.5" r="3" fill="#b8b8f8" stroke="#000" stroke-width="1.1"/><path d="M6.5 6L9.5 9" stroke="#d01010"/></svg>
<div class="t" style="left:1464.4px;top:562.69px;font-size:11px;letter-spacing:-1.297px;color:#1a1a1a;">TOF</div>
<svg style="left:1442px;top:580px" width="16" height="16" viewBox="0 0 16 16" ><rect x="3.5" y="2.5" width="9" height="10" fill="#9898f6" stroke="#1414e6"/><path d="M0 4.5H3.5M0 7.5H3.5M0 10.5H3.5M12.5 4.5H16M12.5 7.5H16" stroke="#1414e6"/><path d="M5 7.5H8M6.5 6V9M10 5.5V10" stroke="#000" stroke-width="1.1"/></svg>
<div class="t" style="left:1464.4px;top:581.69px;font-size:11px;letter-spacing:-1.703px;color:#1a1a1a;">CTU</div>
<svg style="left:1442px;top:599px" width="16" height="16" viewBox="0 0 16 16" ><rect x="3.5" y="2.5" width="9" height="10" fill="#9898f6" stroke="#1414e6"/><path d="M0 4.5H3.5M0 7.5H3.5M0 10.5H3.5M12.5 4.5H16M12.5 7.5H16" stroke="#1414e6"/><path d="M5 7.5H8M10 5.5V10" stroke="#000" stroke-width="1.1"/></svg>
<div class="t" style="left:1464.4px;top:600.69px;font-size:11px;letter-spacing:-1.703px;color:#1a1a1a;">CTD</div>
<svg style="left:1442px;top:618px" width="16" height="16" viewBox="0 0 16 16" ><rect x="3.5" y="2.5" width="9" height="10" fill="#9898f6" stroke="#1414e6"/><path d="M0 3.5H3.5M12.5 3.5H16" stroke="#1414e6"/><path d="M5.5 6.5H10.5M5.5 8.5H10.5" stroke="#000"/></svg>
<div class="t" style="left:1464.4px;top:619.69px;font-size:11px;letter-spacing:-0.899px;color:#1a1a1a;">MOVE</div>
<svg style="left:1442px;top:637px" width="16" height="16" viewBox="0 0 16 16" ><path d="M1 7.5H8" stroke="#1414e6"/><path d="M8 3.5L13.5 7.5 8 11.5" stroke="#1414e6" stroke-width="1.3" fill="none"/></svg>
<div class="t" style="left:1464.4px;top:638.69px;font-size:11px;letter-spacing:-0.299px;color:#1a1a1a;">Jump</div>
<svg style="left:1442px;top:656px" width="16" height="16" viewBox="0 0 16 16" ><path d="M0 7.5H2" stroke="#1414e6"/><path d="M5.5 4.5L2 7.5 5.5 10.5Z" stroke="#1414e6" fill="#9898f6"/><text x="6" y="10.5" font-family="Liberation Sans,sans-serif" font-size="7" font-weight="bold" fill="#000" textLength="10" lengthAdjust="spacingAndGlyphs">RET</text></svg>
<div class="t" style="left:1464.4px;top:657.69px;font-size:11px;letter-spacing:-0.083px;color:#1a1a1a;">Return</div>
<svg style="left:1442px;top:675px" width="16" height="16" viewBox="0 0 16 16" ><path d="M1 4.5H14M7.5 4.5V12.5H14" stroke="#1414e6" fill="none"/><circle cx="7.5" cy="4.5" r="1.4" fill="#000"/></svg>
<div class="t" style="left:1464.4px;top:676.69px;font-size:11px;letter-spacing:-0.291px;color:#1a1a1a;">Branch</div>
<svg style="left:1442px;top:694px" width="16" height="16" viewBox="0 0 16 16" ><path d="M1 7.5H14" stroke="#1414e6" stroke-dasharray="3 1"/><path d="M7.5 2V13M3.5 3.5L11.5 11.5M11.5 3.5L3.5 11.5" stroke="#f03030" stroke-width=".9"/><path d="M7.5 10V14M6 12.5L7.5 14.5 9 12.5" stroke="#1414e6" fill="none"/></svg>
<div class="t" style="left:1464.4px;top:695.69px;font-size:11px;letter-spacing:-0.038px;color:#1a1a1a;">Branch Start/End</div>
<svg style="left:1407px;top:715px" width="9" height="9" viewBox="0 0 9 9" ><rect x="0.5" y="0.5" width="8" height="8" rx="1" fill="#fafcfc" stroke="#9aa6aa"/><path d="M2 4.5H7" stroke="#000"/><path d="M4.5 2V7" stroke="#000"/></svg>
<div class="t b" style="left:1424.3px;top:714.97px;font-size:11.5px;letter-spacing:-0.605px;">POUs</div>
<div class="a" style="left:1401px;top:837px;width:198px;height:1px;background:#fbfbfb;"></div>
<div class="a" style="left:1420px;top:845px;width:143px;height:2px;background:#8a8a8a;"></div>
<div class="a" style="left:0px;top:856px;width:1599px;height:21px;background:linear-gradient(90deg,#f0f0f0,#f3f3f3 40%,#f8f8f8 75%,#fafafa);"></div>
<div class="a" style="left:0px;top:877px;width:1599px;height:1px;background:#d9d9d9;"></div>
<div class="a" style="left:2px;top:858px;width:318px;height:20px;background:#f0f0f0;border:1px solid #7c7c7c;border-bottom:none;border-radius:3px 3px 0 0"></div>
<svg style="left:6px;top:862px" width="13" height="13" viewBox="0 0 13 13" ><rect x="1" y="1" width="11" height="11" fill="#fff" stroke="#18184a" stroke-width="1.4"/><rect x="1" y="1" width="11" height="2.4" fill="#18184a"/><path d="M3 5.5H10M3 7.5H10M3 9.5H10" stroke="#333"/></svg>
<div class="t" style="left:28.3px;top:862.69px;font-size:11px;letter-spacing:0.196px;color:#6a6a6a;">Messages - Total 0 error(s), 0 warning(s), 17 message(s)</div>
<div class="a" style="left:952px;top:880px;width:1px;height:19px;background:#dcdcdc;"></div>
<div class="a" style="left:1214px;top:880px;width:1px;height:19px;background:#dcdcdc;"></div>
<div class="a" style="left:1318px;top:880px;width:1px;height:19px;background:#dcdcdc;"></div>
<div class="a" style="left:1558px;top:880px;width:1px;height:19px;background:#dcdcdc;"></div>
<div class="a" style="left:1582px;top:880px;width:1px;height:19px;background:#dcdcdc;"></div>
<div class="t" style="left:985.3px;top:884.19px;font-size:11px;letter-spacing:-0.144px;">Last build:</div>
<svg style="left:1041px;top:884px" width="12" height="12" viewBox="0 0 12 12" ><circle cx="6" cy="6" r="5.2" fill="#e01818" stroke="#900" stroke-width=".8"/><path d="M3.8 3.8L8.2 8.2M8.2 3.8L3.8 8.2" stroke="#fff" stroke-width="1.8"/></svg>
<div class="t" style="left:1057.5px;top:884.19px;font-size:11px;">0</div>
<svg style="left:1070px;top:884px" width="12" height="12" viewBox="0 0 12 12" ><circle cx="6" cy="6" r="5.2" fill="#ffe818" stroke="#806800" stroke-width=".9"/><path d="M6 2.6V6.6M6 8.2V9.6" stroke="#000" stroke-width="1.6"/></svg>
<div class="t" style="left:1087px;top:884.19px;font-size:11px;">0</div>
<div class="t" style="left:1115.2px;top:884.19px;font-size:11px;letter-spacing:-0.436px;">Precompile</div>
<svg style="left:1171px;top:884px" width="16" height="12" viewBox="0 0 16 12" ><path d="M1 6.5L5.5 11 15 1" stroke="#18a018" stroke-width="2.4" fill="none"/></svg>
<div class="a" style="left:1218px;top:881px;width:77px;height:18px;background:#ff0000;"></div>
<div class="t" style="left:1223.5px;top:884.19px;font-size:11px;letter-spacing:-0.102px;color:#7a0808;">SIMULATION</div>
<svg style="left:1299px;top:882px" width="17" height="16" viewBox="0 0 17 16" ><circle cx="6" cy="6" r="4" fill="none" stroke="#8f8fc4" stroke-width="3"/><circle cx="12.5" cy="3.5" r="2.5" fill="#18c018"/><rect x="7.5" y="7.5" width="8" height="8" fill="#e8e8e8" stroke="#223"/><path d="M9 10.5H14M9 12.5H14" stroke="#223"/></svg>
<div class="t" style="left:1383px;top:884.19px;font-size:11px;letter-spacing:0.347px;">Project user: (nobody)</div>
<svg style="left:1563px;top:881px" width="14" height="15" viewBox="0 0 14 15" ><path d="M7 0.5L13.5 3V8Q13.5 12 7 14.5Q0.5 12 0.5 8V3Z" fill="#b0b0b0" stroke="#555"/><path d="M7 2L2 4V7.5H7Z" fill="#f4dc60"/><path d="M7 7.5H12Q12 11 7 13Z" fill="#f4dc60"/><path d="M7 2L12 4V7.5H7Z" fill="#d4d4d4"/><path d="M7 7.5H2Q2 11 7 13Z" fill="#c4c4c4"/></svg>
</body></html>
